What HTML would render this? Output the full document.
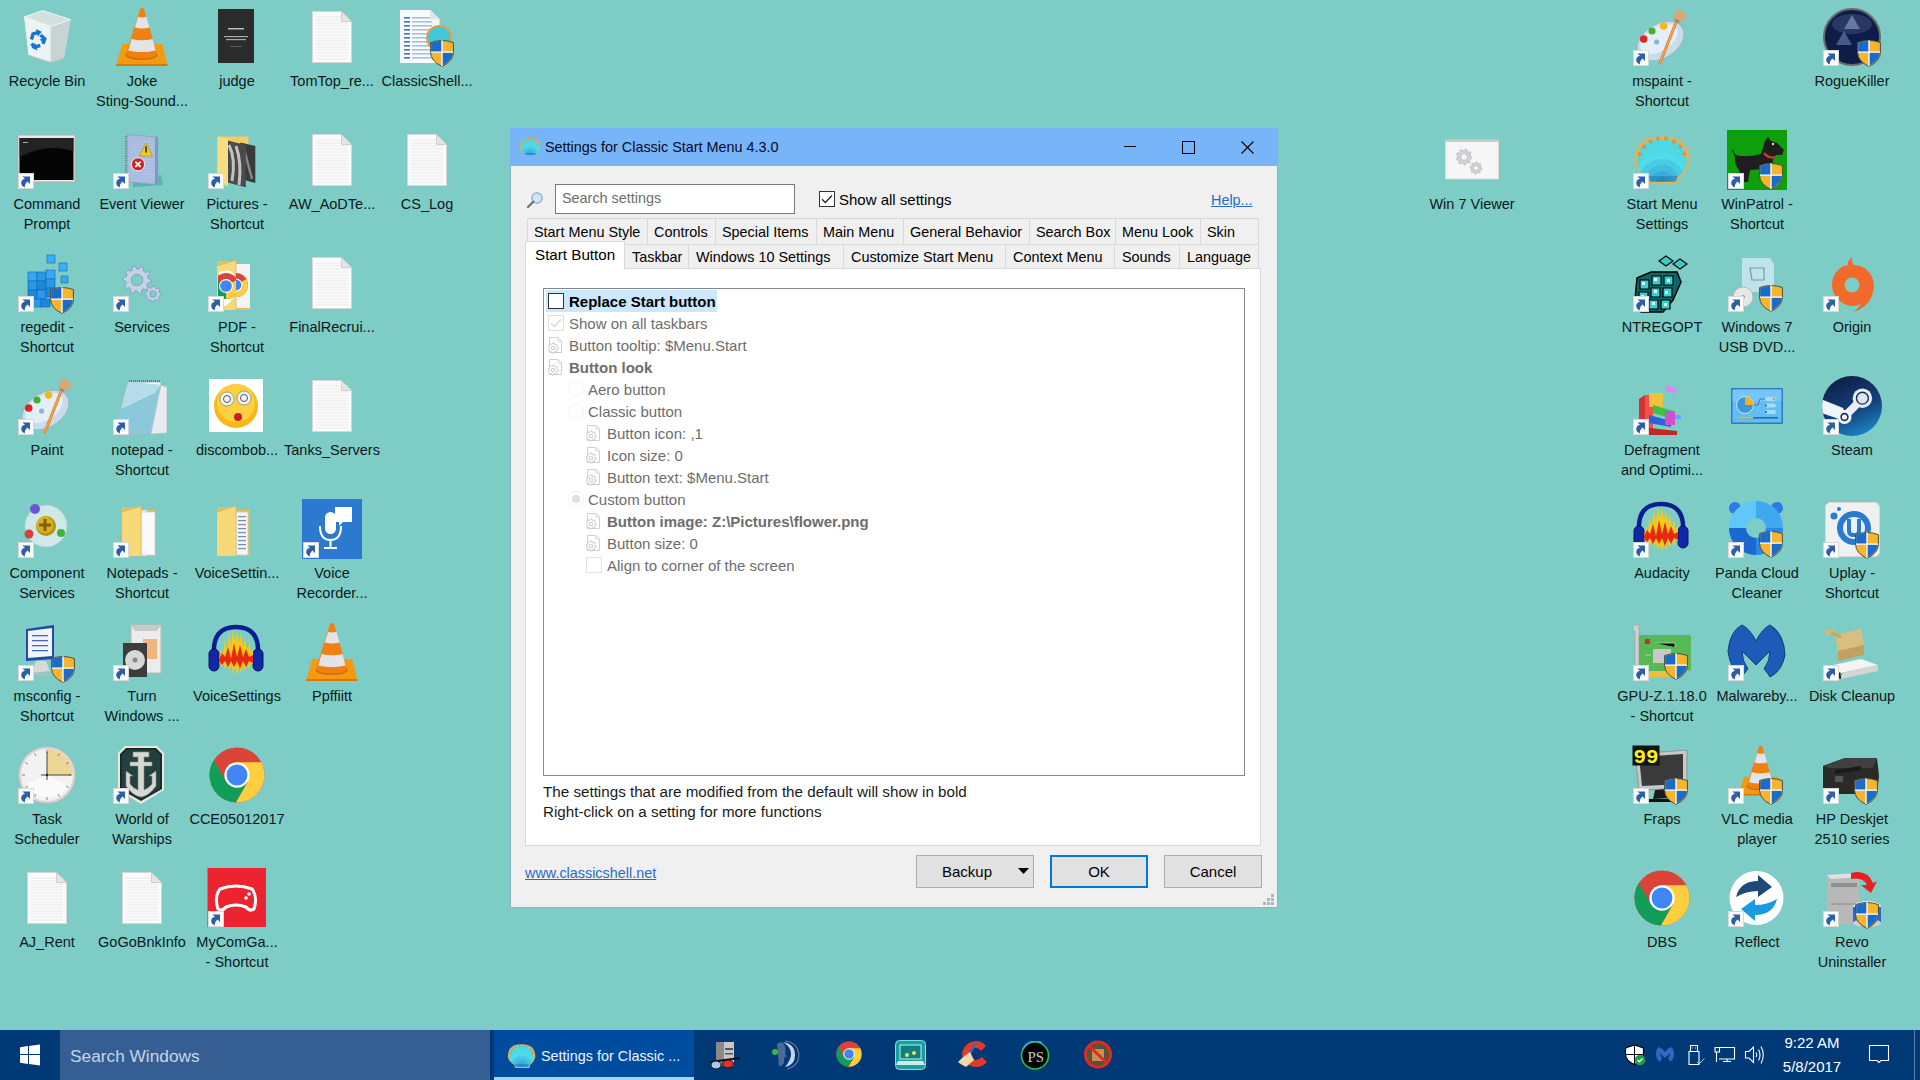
<!DOCTYPE html>
<html><head><meta charset="utf-8">
<style>
*{margin:0;padding:0;box-sizing:border-box}
html,body{width:1920px;height:1080px;overflow:hidden}
body{background:#7ECCC6;font-family:"Liberation Sans",sans-serif;position:relative;color:#000}
.a{position:absolute}
/* desktop icons */
.lb{position:absolute;width:104px;text-align:center;font-size:14.5px;line-height:20px;color:#0C1A1A;white-space:nowrap}
/* dialog */
#win{left:510px;top:128px;width:768px;height:780px;background:#F0F0F0}
#tb{left:0;top:0;width:768px;height:38px;background:#78B4F8}
.t{position:absolute;font-size:14.4px;line-height:18px;white-space:pre}
.tab{position:absolute;height:25px;background:#F0F0F0;border:1px solid #D9D9D9;border-bottom:0;font-size:14.4px;line-height:25px;text-align:left;padding-left:6px;white-space:pre;color:#000}
.btn{position:absolute;top:727px;height:33px;background:#E1E1E1;border:1px solid #ADADAD;font-size:15px;line-height:31px;text-align:center}
.row{position:absolute;left:25px;height:22px;font-size:15px;line-height:24px;white-space:pre;color:#6D6D6D}
/* taskbar */
#task{left:0;top:1030px;width:1920px;height:50px;background:#003976}
</style></head><body>

<div id="desk">
<svg class="a" style="left:16px;top:6px" width="62" height="62" viewBox="0 0 62 62"><path d="M8.2 10.8L26.7 4.6L54.6 13.5L48 51.5L34.7 55.9L12.6 48.9Z" fill="#DCE6E6"/><path d="M8.2 10.8L34.7 20.5L34.7 55.9L12.6 48.9Z" fill="#EEF2F2"/><path d="M34.7 20.5L54.6 13.5L48 51.5L34.7 55.9Z" fill="#C8D4D4"/><path d="M8.2 10.8L26.7 4.6L54.6 13.5L34.7 20.5Z" fill="#D4E0E0" stroke="#F4F8F8" stroke-width="0.8"/><path d="M13 48.9L34.7 55.9L48 51.5L48 53L34.7 57L13 50Z" fill="#B8C4C4"/><g transform="translate(21.5,33) rotate(-15)" fill="none" stroke="#1476D2" stroke-width="3.4"><path d="M-6 -1L-3 -6L2 -6"/><path d="M4 -3L7 2L4 6"/><path d="M1 7L-5 7L-7 3"/></g><g transform="translate(21.5,33) rotate(-15)" fill="#1476D2"><path d="M1 -10L6 -6L1 -2Z"/><path d="M9 0L5 6L2 1Z"/><path d="M-3 3L-3 11L-8 7Z"/></g></svg>
<div class="lb" style="left:-5px;top:71px">Recycle Bin</div>
<svg class="a" style="left:111px;top:6px" width="62" height="62" viewBox="0 0 62 62"><path d="M11.4 38H51.2L56.5 59.5H5.2Z" fill="#F49A10"/><path d="M5.2 58H56.5V60H5.2Z" fill="#D87808"/><path d="M29 3Q31 1 33 3L46 48Q46 53 31 53Q15 53 15 48Z" fill="#F08010"/><path d="M27 10.8Q31 12 35.5 10.8L38.5 21.4Q31 23.5 23.8 21.4Z" fill="#E4E4E8"/><path d="M20.6 32.9Q31 35.5 41.6 32.9L44.6 44.4Q31 47.5 17.2 44.4Z" fill="#E4E4E8"/><path d="M15 48Q15 53 31 53Q46 53 46 48" fill="none" stroke="#D06A08" stroke-width="1.5"/></svg>
<div class="lb" style="left:90px;top:71px">Joke<br>Sting-Sound...</div>
<svg class="a" style="left:206px;top:6px" width="62" height="62" viewBox="0 0 62 62"><rect x="12" y="3" width="36" height="54" fill="#2B2B2B"/><rect x="22" y="22" width="16" height="1.5" fill="#bbb"/><rect x="18" y="30" width="24" height="1.2" fill="#aaa"/><rect x="20" y="33" width="20" height="1.2" fill="#aaa"/><rect x="24" y="40" width="12" height="0.8" fill="#666"/></svg>
<div class="lb" style="left:185px;top:71px">judge</div>
<svg class="a" style="left:301px;top:6px" width="62" height="62" viewBox="0 0 62 62"><path d="M11.5 5.5H40.5L50.5 15.5V56.5H11.5Z" fill="#FBFBFB" stroke="#D6D6D6"/><line x1="15" x2="47" y1="11" y2="11" stroke="#E6E6E6" stroke-width="0.8"/><line x1="15" x2="47" y1="14" y2="14" stroke="#E6E6E6" stroke-width="0.8"/><line x1="15" x2="47" y1="17" y2="17" stroke="#E6E6E6" stroke-width="0.8"/><line x1="15" x2="47" y1="20" y2="20" stroke="#E6E6E6" stroke-width="0.8"/><line x1="15" x2="47" y1="23" y2="23" stroke="#E6E6E6" stroke-width="0.8"/><line x1="15" x2="47" y1="26" y2="26" stroke="#E6E6E6" stroke-width="0.8"/><line x1="15" x2="47" y1="29" y2="29" stroke="#E6E6E6" stroke-width="0.8"/><line x1="15" x2="47" y1="32" y2="32" stroke="#E6E6E6" stroke-width="0.8"/><line x1="15" x2="47" y1="35" y2="35" stroke="#E6E6E6" stroke-width="0.8"/><line x1="15" x2="47" y1="38" y2="38" stroke="#E6E6E6" stroke-width="0.8"/><line x1="15" x2="47" y1="41" y2="41" stroke="#E6E6E6" stroke-width="0.8"/><line x1="15" x2="47" y1="44" y2="44" stroke="#E6E6E6" stroke-width="0.8"/><line x1="15" x2="47" y1="47" y2="47" stroke="#E6E6E6" stroke-width="0.8"/><line x1="15" x2="47" y1="50" y2="50" stroke="#E6E6E6" stroke-width="0.8"/><line x1="15" x2="47" y1="53" y2="53" stroke="#E6E6E6" stroke-width="0.8"/><path d="M40.5 5.5V15.5H50.5Z" fill="#E4E4E4" stroke="#D0D0D0"/></svg>
<div class="lb" style="left:280px;top:71px">TomTop_re...</div>
<svg class="a" style="left:396px;top:6px" width="62" height="62" viewBox="0 0 62 62"><path d="M3.5 3.5H34L44 13.5V57.5H3.5Z" fill="#F8FAFC" stroke="#A8B8C8"/><rect x="8" y="11" width="6" height="1.6" fill="#3C74C8"/><rect x="16" y="11" width="20" height="1.6" fill="#A8C0DC"/><rect x="8" y="15" width="6" height="1.6" fill="#3C74C8"/><rect x="16" y="15" width="20" height="1.6" fill="#A8C0DC"/><rect x="8" y="19" width="6" height="1.6" fill="#3C74C8"/><rect x="16" y="19" width="20" height="1.6" fill="#A8C0DC"/><rect x="8" y="23" width="6" height="1.6" fill="#3C74C8"/><rect x="16" y="23" width="20" height="1.6" fill="#A8C0DC"/><rect x="8" y="27" width="6" height="1.6" fill="#3C74C8"/><rect x="16" y="27" width="20" height="1.6" fill="#A8C0DC"/><rect x="8" y="31" width="6" height="1.6" fill="#3C74C8"/><rect x="16" y="31" width="20" height="1.6" fill="#A8C0DC"/><rect x="8" y="35" width="6" height="1.6" fill="#3C74C8"/><rect x="16" y="35" width="20" height="1.6" fill="#A8C0DC"/><rect x="8" y="39" width="6" height="1.6" fill="#3C74C8"/><rect x="16" y="39" width="20" height="1.6" fill="#A8C0DC"/><rect x="8" y="43" width="6" height="1.6" fill="#3C74C8"/><rect x="16" y="43" width="20" height="1.6" fill="#A8C0DC"/><rect x="8" y="47" width="6" height="1.6" fill="#3C74C8"/><rect x="16" y="47" width="20" height="1.6" fill="#A8C0DC"/><rect x="8" y="51" width="6" height="1.6" fill="#3C74C8"/><rect x="16" y="51" width="20" height="1.6" fill="#A8C0DC"/><path d="M34 3.5V13.5H44Z" fill="#DDE6EE"/><circle cx="43" cy="32" r="13" fill="#E89A4A"/><circle cx="43" cy="32" r="11" fill="#3FC8D8"/><g transform="translate(34,33) scale(1.200)"><path d="M0.5 3Q10 -0.5 19.5 3V11Q19.5 18.5 10 22.8Q0.5 18.5 0.5 11Z" fill="#F6B52C" stroke="#4A4A3A" stroke-width="0.8"/><path d="M1 3.4Q5.5 1.6 10 1.2V11H1Z" fill="#1B6BCB"/><path d="M10 11H19Q18.8 18 10 22.2Z" fill="#1B6BCB"/><path d="M10 1V22.4M0.8 11H19.2" stroke="#FFFFFF" stroke-width="1.1"/></g></svg>
<div class="lb" style="left:375px;top:71px">ClassicShell...</div>
<svg class="a" style="left:16px;top:129px" width="62" height="62" viewBox="0 0 62 62"><rect x="2" y="6" width="57" height="47" fill="#E8E8E8" stroke="#B0B0B0"/><rect x="3.5" y="9" width="54" height="42" fill="#050505"/><path d="M3.5 9H57.5V22Q30 14 3.5 28Z" fill="#2A2A2A" opacity="0.8"/><rect x="7" y="13" width="5" height="1" fill="#aaa"/><rect x="2.5" y="44.5" width="15" height="15" fill="#FBFBFB" stroke="#D8D8D8"/><path d="M6.4 47.4H14V55L11.6 52.6Q8.6 54.6 8.8 58.6Q5 57 5.2 53.6Q5.6 50.6 9 49.8Z" fill="#2D5EA8"/></svg>
<div class="lb" style="left:-5px;top:194px">Command<br>Prompt</div>
<svg class="a" style="left:111px;top:129px" width="62" height="62" viewBox="0 0 62 62"><path d="M22 50L50 46L52 56L22 58Z" fill="#3A9C98" opacity="0.5"/><path d="M16 5.5L46.7 8V55.6L16 53Z" fill="#A8BCE0" stroke="#8AA0C8" stroke-width="0.8"/><path d="M44 8L47 8.3V55.6L44 55Z" fill="#8098C4"/><line x1="20" x2="43" y1="12" y2="12.6" stroke="#B8CAE8" stroke-width="0.6"/><line x1="20" x2="43" y1="15" y2="15.6" stroke="#B8CAE8" stroke-width="0.6"/><line x1="20" x2="43" y1="18" y2="18.6" stroke="#B8CAE8" stroke-width="0.6"/><line x1="20" x2="43" y1="21" y2="21.6" stroke="#B8CAE8" stroke-width="0.6"/><line x1="20" x2="43" y1="24" y2="24.6" stroke="#B8CAE8" stroke-width="0.6"/><line x1="20" x2="43" y1="27" y2="27.6" stroke="#B8CAE8" stroke-width="0.6"/><line x1="20" x2="43" y1="30" y2="30.6" stroke="#B8CAE8" stroke-width="0.6"/><line x1="20" x2="43" y1="33" y2="33.6" stroke="#B8CAE8" stroke-width="0.6"/><line x1="20" x2="43" y1="36" y2="36.6" stroke="#B8CAE8" stroke-width="0.6"/><line x1="20" x2="43" y1="39" y2="39.6" stroke="#B8CAE8" stroke-width="0.6"/><line x1="20" x2="43" y1="42" y2="42.6" stroke="#B8CAE8" stroke-width="0.6"/><line x1="20" x2="43" y1="45" y2="45.6" stroke="#B8CAE8" stroke-width="0.6"/><line x1="20" x2="43" y1="48" y2="48.6" stroke="#B8CAE8" stroke-width="0.6"/><line x1="20" x2="43" y1="51" y2="51.6" stroke="#B8CAE8" stroke-width="0.6"/><path d="M15 7V53" stroke="#7A86A0" stroke-width="2.4" stroke-dasharray="1.2 1.2"/><path d="M35 14L41.5 27H28.5Z" fill="#F4CC20" stroke="#B8940C" stroke-width="0.8"/><rect x="34.3" y="17.5" width="1.5" height="6" fill="#222"/><circle cx="27" cy="35.3" r="6.6" fill="#C82222" stroke="#F0F0F0" stroke-width="1"/><path d="M24.3 32.6L29.7 38M29.7 32.6L24.3 38" stroke="#F0F0F0" stroke-width="1.8"/><rect x="2.5" y="44.5" width="15" height="15" fill="#FBFBFB" stroke="#D8D8D8"/><path d="M6.4 47.4H14V55L11.6 52.6Q8.6 54.6 8.8 58.6Q5 57 5.2 53.6Q5.6 50.6 9 49.8Z" fill="#2D5EA8"/></svg>
<div class="lb" style="left:90px;top:194px">Event Viewer</div>
<svg class="a" style="left:206px;top:129px" width="62" height="62" viewBox="0 0 62 62"><path d="M11.3 7.5H42.5V50H11.3Z" fill="#F0CC6A"/><path d="M34.4 13.6L49.3 17V54L34.4 50Z" fill="#3A3A3A"/><path d="M38 20L46 50" stroke="#9A9A9A" stroke-width="2.5" opacity="0.8"/><path d="M19.4 10.9L39.8 16V58.3L19.4 53Z" fill="#4A4A4A"/><path d="M23 16Q30 30 26 52M30 17Q36 34 33 56" stroke="#D8D8D8" stroke-width="3" fill="none" opacity="0.85"/><path d="M11.3 7.5L22 10V57.6L11.3 52Z" fill="#F8DC80"/><rect x="2.5" y="44.5" width="15" height="15" fill="#FBFBFB" stroke="#D8D8D8"/><path d="M6.4 47.4H14V55L11.6 52.6Q8.6 54.6 8.8 58.6Q5 57 5.2 53.6Q5.6 50.6 9 49.8Z" fill="#2D5EA8"/></svg>
<div class="lb" style="left:185px;top:194px">Pictures -<br>Shortcut</div>
<svg class="a" style="left:301px;top:129px" width="62" height="62" viewBox="0 0 62 62"><path d="M11.5 5.5H40.5L50.5 15.5V56.5H11.5Z" fill="#FBFBFB" stroke="#D6D6D6"/><line x1="15" x2="47" y1="11" y2="11" stroke="#E6E6E6" stroke-width="0.8"/><line x1="15" x2="47" y1="14" y2="14" stroke="#E6E6E6" stroke-width="0.8"/><line x1="15" x2="47" y1="17" y2="17" stroke="#E6E6E6" stroke-width="0.8"/><line x1="15" x2="47" y1="20" y2="20" stroke="#E6E6E6" stroke-width="0.8"/><line x1="15" x2="47" y1="23" y2="23" stroke="#E6E6E6" stroke-width="0.8"/><line x1="15" x2="47" y1="26" y2="26" stroke="#E6E6E6" stroke-width="0.8"/><line x1="15" x2="47" y1="29" y2="29" stroke="#E6E6E6" stroke-width="0.8"/><line x1="15" x2="47" y1="32" y2="32" stroke="#E6E6E6" stroke-width="0.8"/><line x1="15" x2="47" y1="35" y2="35" stroke="#E6E6E6" stroke-width="0.8"/><line x1="15" x2="47" y1="38" y2="38" stroke="#E6E6E6" stroke-width="0.8"/><line x1="15" x2="47" y1="41" y2="41" stroke="#E6E6E6" stroke-width="0.8"/><line x1="15" x2="47" y1="44" y2="44" stroke="#E6E6E6" stroke-width="0.8"/><line x1="15" x2="47" y1="47" y2="47" stroke="#E6E6E6" stroke-width="0.8"/><line x1="15" x2="47" y1="50" y2="50" stroke="#E6E6E6" stroke-width="0.8"/><line x1="15" x2="47" y1="53" y2="53" stroke="#E6E6E6" stroke-width="0.8"/><path d="M40.5 5.5V15.5H50.5Z" fill="#E4E4E4" stroke="#D0D0D0"/></svg>
<div class="lb" style="left:280px;top:194px">AW_AoDTe...</div>
<svg class="a" style="left:396px;top:129px" width="62" height="62" viewBox="0 0 62 62"><path d="M11.5 5.5H40.5L50.5 15.5V56.5H11.5Z" fill="#FBFBFB" stroke="#D6D6D6"/><line x1="15" x2="47" y1="11" y2="11" stroke="#E6E6E6" stroke-width="0.8"/><line x1="15" x2="47" y1="14" y2="14" stroke="#E6E6E6" stroke-width="0.8"/><line x1="15" x2="47" y1="17" y2="17" stroke="#E6E6E6" stroke-width="0.8"/><line x1="15" x2="47" y1="20" y2="20" stroke="#E6E6E6" stroke-width="0.8"/><line x1="15" x2="47" y1="23" y2="23" stroke="#E6E6E6" stroke-width="0.8"/><line x1="15" x2="47" y1="26" y2="26" stroke="#E6E6E6" stroke-width="0.8"/><line x1="15" x2="47" y1="29" y2="29" stroke="#E6E6E6" stroke-width="0.8"/><line x1="15" x2="47" y1="32" y2="32" stroke="#E6E6E6" stroke-width="0.8"/><line x1="15" x2="47" y1="35" y2="35" stroke="#E6E6E6" stroke-width="0.8"/><line x1="15" x2="47" y1="38" y2="38" stroke="#E6E6E6" stroke-width="0.8"/><line x1="15" x2="47" y1="41" y2="41" stroke="#E6E6E6" stroke-width="0.8"/><line x1="15" x2="47" y1="44" y2="44" stroke="#E6E6E6" stroke-width="0.8"/><line x1="15" x2="47" y1="47" y2="47" stroke="#E6E6E6" stroke-width="0.8"/><line x1="15" x2="47" y1="50" y2="50" stroke="#E6E6E6" stroke-width="0.8"/><line x1="15" x2="47" y1="53" y2="53" stroke="#E6E6E6" stroke-width="0.8"/><path d="M40.5 5.5V15.5H50.5Z" fill="#E4E4E4" stroke="#D0D0D0"/></svg>
<div class="lb" style="left:375px;top:194px">CS_Log</div>
<svg class="a" style="left:16px;top:252px" width="62" height="62" viewBox="0 0 62 62"><rect x="12" y="20" width="9" height="9" fill="#3AA8F0" stroke="#0A6AB8" stroke-width="0.6"/><rect x="21" y="20" width="9" height="9" fill="#2C98E6" stroke="#0A6AB8" stroke-width="0.6"/><rect x="30" y="18" width="9" height="9" fill="#3AA8F0" stroke="#0A6AB8" stroke-width="0.6"/><rect x="12" y="29" width="9" height="9" fill="#2C98E6" stroke="#0A6AB8" stroke-width="0.6"/><rect x="21" y="29" width="9" height="9" fill="#1C88D8" stroke="#0A6AB8" stroke-width="0.6"/><rect x="30" y="27" width="9" height="9" fill="#2C98E6" stroke="#0A6AB8" stroke-width="0.6"/><rect x="12" y="38" width="9" height="9" fill="#1C88D8" stroke="#0A6AB8" stroke-width="0.6"/><rect x="21" y="38" width="9" height="9" fill="#2C98E6" stroke="#0A6AB8" stroke-width="0.6"/><rect x="30" y="36" width="9" height="9" fill="#1C88D8" stroke="#0A6AB8" stroke-width="0.6"/><rect x="16" y="47" width="9" height="8" fill="#2C98E6" stroke="#0A6AB8" stroke-width="0.6"/><rect x="25" y="47" width="9" height="8" fill="#1C88D8" stroke="#0A6AB8" stroke-width="0.6"/><rect x="31" y="3" width="8" height="8" fill="#3AB0F8" stroke="#0A6AB8" stroke-width="0.6"/><rect x="43" y="11" width="8" height="8" fill="#3AB0F8" stroke="#0A6AB8" stroke-width="0.6"/><rect x="45" y="24" width="7" height="7" fill="#3AA8F0" stroke="#0A6AB8" stroke-width="0.6"/><g transform="translate(34,34) scale(1.200)"><path d="M0.5 3Q10 -0.5 19.5 3V11Q19.5 18.5 10 22.8Q0.5 18.5 0.5 11Z" fill="#F6B52C" stroke="#4A4A3A" stroke-width="0.8"/><path d="M1 3.4Q5.5 1.6 10 1.2V11H1Z" fill="#1B6BCB"/><path d="M10 11H19Q18.8 18 10 22.2Z" fill="#1B6BCB"/><path d="M10 1V22.4M0.8 11H19.2" stroke="#FFFFFF" stroke-width="1.1"/></g><rect x="2.5" y="44.5" width="15" height="15" fill="#FBFBFB" stroke="#D8D8D8"/><path d="M6.4 47.4H14V55L11.6 52.6Q8.6 54.6 8.8 58.6Q5 57 5.2 53.6Q5.6 50.6 9 49.8Z" fill="#2D5EA8"/></svg>
<div class="lb" style="left:-5px;top:317px">regedit -<br>Shortcut</div>
<svg class="a" style="left:111px;top:252px" width="62" height="62" viewBox="0 0 62 62"><polygon points="40.00,28.00 39.83,30.19 36.39,31.37 35.73,32.96 37.33,36.23 35.90,37.90 32.42,36.83 30.96,37.73 30.33,41.31 28.19,41.83 26.00,38.92 24.29,38.79 21.67,41.31 19.64,40.47 19.58,36.83 18.28,35.72 14.67,36.23 13.53,34.36 15.61,31.37 15.21,29.71 12.00,28.00 12.17,25.81 15.61,24.63 16.27,23.04 14.67,19.77 16.10,18.10 19.58,19.17 21.04,18.27 21.67,14.69 23.81,14.17 26.00,17.08 27.71,17.21 30.33,14.69 32.36,15.53 32.42,19.17 33.72,20.28 37.33,19.77 38.47,21.64 36.39,24.63 36.79,26.29" fill="#C4D2E8" stroke="#8898B8" stroke-width="0.8"/><circle cx="26" cy="28" r="5.88" fill="#7ECCC6" stroke="#8898B8" stroke-width="0.8"/><polygon points="50.00,42.00 49.85,43.56 47.77,44.39 47.19,45.47 47.66,47.66 46.44,48.65 44.39,47.77 43.22,48.12 42.00,50.00 40.44,49.85 39.61,47.77 38.53,47.19 36.34,47.66 35.35,46.44 36.23,44.39 35.88,43.22 34.00,42.00 34.15,40.44 36.23,39.61 36.81,38.53 36.34,36.34 37.56,35.35 39.61,36.23 40.78,35.88 42.00,34.00 43.56,34.15 44.39,36.23 45.47,36.81 47.66,36.34 48.65,37.56 47.77,39.61 48.12,40.78" fill="#C4D2E8" stroke="#8898B8" stroke-width="0.8"/><circle cx="42" cy="42" r="3.36" fill="#7ECCC6" stroke="#8898B8" stroke-width="0.8"/><rect x="2.5" y="44.5" width="15" height="15" fill="#FBFBFB" stroke="#D8D8D8"/><path d="M6.4 47.4H14V55L11.6 52.6Q8.6 54.6 8.8 58.6Q5 57 5.2 53.6Q5.6 50.6 9 49.8Z" fill="#2D5EA8"/></svg>
<div class="lb" style="left:90px;top:317px">Services</div>
<svg class="a" style="left:206px;top:252px" width="62" height="62" viewBox="0 0 62 62"><path d="M11 9H28L31 12H44V58H11Z" fill="#E9BE55"/><rect x="28" y="12" width="16" height="44" fill="#F4F4F4"/><path d="M11 14L30 8V58L11 58Z" fill="#F8D97A"/><path d="M11 14L30 8V58" fill="none" stroke="#E0B450" stroke-width="0.8"/><g><path d="M13 20Q30 14 30 32Q30 52 13 56Z" fill="#fff"/></g><clipPath id="cpf12"><path d="M12 14L30 8V58H12Z"/></clipPath><g clip-path="url(#cpf12)"><circle cx="20" cy="34" r="13" fill="#DB4437"/><path d="M20 34 L20.00 47.00 A13 13 0 0 1 8.74 27.50 Z" fill="#0F9D58"/><path d="M20 34 L31.26 27.50 A13 13 0 0 1 20.00 47.00 Z" fill="#FFCD40"/><circle cx="20" cy="34" r="7.02" fill="#fff"/><circle cx="20" cy="34" r="5.85" fill="#4285F4"/></g><clipPath id="cpf212"><rect x="30" y="12" width="14" height="44"/></clipPath><g clip-path="url(#cpf212)"><circle cx="30" cy="33" r="12" fill="#DB4437"/><path d="M30 33 L30.00 45.00 A12 12 0 0 1 19.61 27.00 Z" fill="#0F9D58"/><path d="M30 33 L40.39 27.00 A12 12 0 0 1 30.00 45.00 Z" fill="#FFCD40"/><circle cx="30" cy="33" r="6.48" fill="#fff"/><circle cx="30" cy="33" r="5.40" fill="#4285F4"/></g><rect x="2.5" y="44.5" width="15" height="15" fill="#FBFBFB" stroke="#D8D8D8"/><path d="M6.4 47.4H14V55L11.6 52.6Q8.6 54.6 8.8 58.6Q5 57 5.2 53.6Q5.6 50.6 9 49.8Z" fill="#2D5EA8"/></svg>
<div class="lb" style="left:185px;top:317px">PDF -<br>Shortcut</div>
<svg class="a" style="left:301px;top:252px" width="62" height="62" viewBox="0 0 62 62"><path d="M11.5 5.5H40.5L50.5 15.5V56.5H11.5Z" fill="#FBFBFB" stroke="#D6D6D6"/><line x1="15" x2="47" y1="11" y2="11" stroke="#E6E6E6" stroke-width="0.8"/><line x1="15" x2="47" y1="14" y2="14" stroke="#E6E6E6" stroke-width="0.8"/><line x1="15" x2="47" y1="17" y2="17" stroke="#E6E6E6" stroke-width="0.8"/><line x1="15" x2="47" y1="20" y2="20" stroke="#E6E6E6" stroke-width="0.8"/><line x1="15" x2="47" y1="23" y2="23" stroke="#E6E6E6" stroke-width="0.8"/><line x1="15" x2="47" y1="26" y2="26" stroke="#E6E6E6" stroke-width="0.8"/><line x1="15" x2="47" y1="29" y2="29" stroke="#E6E6E6" stroke-width="0.8"/><line x1="15" x2="47" y1="32" y2="32" stroke="#E6E6E6" stroke-width="0.8"/><line x1="15" x2="47" y1="35" y2="35" stroke="#E6E6E6" stroke-width="0.8"/><line x1="15" x2="47" y1="38" y2="38" stroke="#E6E6E6" stroke-width="0.8"/><line x1="15" x2="47" y1="41" y2="41" stroke="#E6E6E6" stroke-width="0.8"/><line x1="15" x2="47" y1="44" y2="44" stroke="#E6E6E6" stroke-width="0.8"/><line x1="15" x2="47" y1="47" y2="47" stroke="#E6E6E6" stroke-width="0.8"/><line x1="15" x2="47" y1="50" y2="50" stroke="#E6E6E6" stroke-width="0.8"/><line x1="15" x2="47" y1="53" y2="53" stroke="#E6E6E6" stroke-width="0.8"/><path d="M40.5 5.5V15.5H50.5Z" fill="#E4E4E4" stroke="#D0D0D0"/></svg>
<div class="lb" style="left:280px;top:317px">FinalRecrui...</div>
<svg class="a" style="left:16px;top:375px" width="62" height="62" viewBox="0 0 62 62"><ellipse cx="29.5" cy="35" rx="25.5" ry="17" transform="rotate(-32 29.5 35)" fill="#C8DCEC" stroke="#9AB4CA" stroke-width="0.8"/><ellipse cx="28" cy="33" rx="21" ry="12" transform="rotate(-32 28 33)" fill="#E2EEF8"/><circle cx="12.7" cy="33" r="3.8" fill="#E02424"/><circle cx="21" cy="25" r="3.6" fill="#44B030"/><circle cx="32.6" cy="20" r="3.8" fill="#F4B818"/><circle cx="25.6" cy="36" r="2.6" fill="#8EB4C8"/><path d="M29 57L46 14" stroke="#E8862A" stroke-width="3" stroke-linecap="round"/><path d="M29 57L46 14" stroke="#F8B060" stroke-width="1" stroke-linecap="round"/><path d="M44 15L42 12L47 3L57 9L49 17Z" fill="#D8A870"/><path d="M44 14L48 16" stroke="#8A8A8A" stroke-width="2"/><rect x="2.5" y="44.5" width="15" height="15" fill="#FBFBFB" stroke="#D8D8D8"/><path d="M6.4 47.4H14V55L11.6 52.6Q8.6 54.6 8.8 58.6Q5 57 5.2 53.6Q5.6 50.6 9 49.8Z" fill="#2D5EA8"/></svg>
<div class="lb" style="left:-5px;top:440px">Paint</div>
<svg class="a" style="left:111px;top:375px" width="62" height="62" viewBox="0 0 62 62"><path d="M17 7H50V55L40 59H3Z" fill="#F4F8FA" stroke="#A8B4BC"/><path d="M17 7L3 59H40L50 10Z" fill="#8CC8DC"/><path d="M17 7L10 34L44 18L50 10Z" fill="#C8E6F0" opacity="0.7"/><path d="M50 10L56 12V58L40 59Z" fill="#E8ECEE" stroke="#B0B8BC" stroke-width="0.6"/><path d="M18 6H50" stroke="#707070" stroke-width="2" stroke-dasharray="1 1"/><rect x="2.5" y="44.5" width="15" height="15" fill="#FBFBFB" stroke="#D8D8D8"/><path d="M6.4 47.4H14V55L11.6 52.6Q8.6 54.6 8.8 58.6Q5 57 5.2 53.6Q5.6 50.6 9 49.8Z" fill="#2D5EA8"/></svg>
<div class="lb" style="left:90px;top:440px">notepad -<br>Shortcut</div>
<svg class="a" style="left:206px;top:375px" width="62" height="62" viewBox="0 0 62 62"><rect x="3" y="4" width="54" height="53" fill="#FFFFFF"/><circle cx="30" cy="31" r="22" fill="#F8B818"/><circle cx="30" cy="28" r="19" fill="#FCD040"/><circle cx="21" cy="24" r="7" fill="#F4F4F4" stroke="#888" stroke-width="0.8"/><circle cx="38" cy="23" r="7" fill="#F4F4F4" stroke="#888" stroke-width="0.8"/><circle cx="21" cy="24" r="3.5" fill="none" stroke="#555" stroke-width="1"/><circle cx="38" cy="23" r="3.5" fill="none" stroke="#555" stroke-width="1"/><circle cx="32" cy="42" r="4" fill="#C82020"/></svg>
<div class="lb" style="left:185px;top:440px">discombob...</div>
<svg class="a" style="left:301px;top:375px" width="62" height="62" viewBox="0 0 62 62"><path d="M11.5 5.5H40.5L50.5 15.5V56.5H11.5Z" fill="#FBFBFB" stroke="#D6D6D6"/><line x1="15" x2="47" y1="11" y2="11" stroke="#E6E6E6" stroke-width="0.8"/><line x1="15" x2="47" y1="14" y2="14" stroke="#E6E6E6" stroke-width="0.8"/><line x1="15" x2="47" y1="17" y2="17" stroke="#E6E6E6" stroke-width="0.8"/><line x1="15" x2="47" y1="20" y2="20" stroke="#E6E6E6" stroke-width="0.8"/><line x1="15" x2="47" y1="23" y2="23" stroke="#E6E6E6" stroke-width="0.8"/><line x1="15" x2="47" y1="26" y2="26" stroke="#E6E6E6" stroke-width="0.8"/><line x1="15" x2="47" y1="29" y2="29" stroke="#E6E6E6" stroke-width="0.8"/><line x1="15" x2="47" y1="32" y2="32" stroke="#E6E6E6" stroke-width="0.8"/><line x1="15" x2="47" y1="35" y2="35" stroke="#E6E6E6" stroke-width="0.8"/><line x1="15" x2="47" y1="38" y2="38" stroke="#E6E6E6" stroke-width="0.8"/><line x1="15" x2="47" y1="41" y2="41" stroke="#E6E6E6" stroke-width="0.8"/><line x1="15" x2="47" y1="44" y2="44" stroke="#E6E6E6" stroke-width="0.8"/><line x1="15" x2="47" y1="47" y2="47" stroke="#E6E6E6" stroke-width="0.8"/><line x1="15" x2="47" y1="50" y2="50" stroke="#E6E6E6" stroke-width="0.8"/><line x1="15" x2="47" y1="53" y2="53" stroke="#E6E6E6" stroke-width="0.8"/><path d="M40.5 5.5V15.5H50.5Z" fill="#E4E4E4" stroke="#D0D0D0"/></svg>
<div class="lb" style="left:280px;top:440px">Tanks_Servers</div>
<svg class="a" style="left:16px;top:498px" width="62" height="62" viewBox="0 0 62 62"><circle cx="30" cy="28" r="21" fill="#D8ECEC" opacity="0.9" stroke="#B8D4D8"/><circle cx="30" cy="28" r="10" fill="#B89010"/><circle cx="29" cy="27" r="8.5" fill="#D8B020"/><path d="M29 21V33M23 27H35" stroke="#806008" stroke-width="3"/><circle cx="19" cy="11" r="5" fill="#6858D8"/><circle cx="13" cy="36" r="4.5" fill="#D84040"/><circle cx="45" cy="35" r="4" fill="#40B040"/><rect x="2.5" y="44.5" width="15" height="15" fill="#FBFBFB" stroke="#D8D8D8"/><path d="M6.4 47.4H14V55L11.6 52.6Q8.6 54.6 8.8 58.6Q5 57 5.2 53.6Q5.6 50.6 9 49.8Z" fill="#2D5EA8"/></svg>
<div class="lb" style="left:-5px;top:563px">Component<br>Services</div>
<svg class="a" style="left:111px;top:498px" width="62" height="62" viewBox="0 0 62 62"><path d="M11 9H28L31 12H44V58H11Z" fill="#E9BE55"/><path d="M16 12H36V58H16Z" fill="#F0F0F0" stroke="#C8C8C8" stroke-width="0.6"/><path d="M30 14H44V57H30Z" fill="#FAFAFA" stroke="#C8C8C8" stroke-width="0.6"/><path d="M11 14L30 8V58L11 58Z" fill="#F8D97A"/><path d="M11 14L30 8V58" fill="none" stroke="#E0B450" stroke-width="0.8"/><rect x="2.5" y="44.5" width="15" height="15" fill="#FBFBFB" stroke="#D8D8D8"/><path d="M6.4 47.4H14V55L11.6 52.6Q8.6 54.6 8.8 58.6Q5 57 5.2 53.6Q5.6 50.6 9 49.8Z" fill="#2D5EA8"/></svg>
<div class="lb" style="left:90px;top:563px">Notepads -<br>Shortcut</div>
<svg class="a" style="left:206px;top:498px" width="62" height="62" viewBox="0 0 62 62"><path d="M11 9H28L31 12H44V58H11Z" fill="#E9BE55"/><path d="M30 14H42V57H30Z" fill="#F4F4F4" stroke="#C0C0C0" stroke-width="0.6"/><rect x="32" y="18" width="8" height="1.2" fill="#7090B0"/><rect x="32" y="22" width="8" height="1.2" fill="#7090B0"/><rect x="32" y="26" width="8" height="1.2" fill="#7090B0"/><rect x="32" y="30" width="8" height="1.2" fill="#7090B0"/><rect x="32" y="34" width="8" height="1.2" fill="#7090B0"/><rect x="32" y="38" width="8" height="1.2" fill="#7090B0"/><rect x="32" y="42" width="8" height="1.2" fill="#7090B0"/><rect x="32" y="46" width="8" height="1.2" fill="#7090B0"/><rect x="32" y="50" width="8" height="1.2" fill="#7090B0"/><path d="M11 14L30 8V58L11 58Z" fill="#F8D97A"/><path d="M11 14L30 8V58" fill="none" stroke="#E0B450" stroke-width="0.8"/></svg>
<div class="lb" style="left:185px;top:563px">VoiceSettin...</div>
<svg class="a" style="left:301px;top:498px" width="62" height="62" viewBox="0 0 62 62"><rect x="1" y="1" width="60" height="60" fill="#2B7AD0"/><rect x="24" y="14" width="11" height="22" rx="5.5" fill="#fff"/><path d="M19 28Q19 42 29.5 42Q40 42 40 28" fill="none" stroke="#fff" stroke-width="2"/><path d="M29.5 42V49M23 50H36" stroke="#fff" stroke-width="2"/><path d="M34 9H51V24H42L38 28V24H34Z" fill="#fff"/><rect x="2.5" y="44.5" width="15" height="15" fill="#FBFBFB" stroke="#D8D8D8"/><path d="M6.4 47.4H14V55L11.6 52.6Q8.6 54.6 8.8 58.6Q5 57 5.2 53.6Q5.6 50.6 9 49.8Z" fill="#2D5EA8"/></svg>
<div class="lb" style="left:280px;top:563px">Voice<br>Recorder...</div>
<svg class="a" style="left:16px;top:621px" width="62" height="62" viewBox="0 0 62 62"><path d="M10 8L38 4V38L10 40Z" fill="#2848A8"/><path d="M12 10L36 7V35L12 37Z" fill="#F0F4FC"/><rect x="16" y="14" width="16" height="1.3" fill="#4868B8"/><rect x="16" y="19" width="16" height="1.3" fill="#4868B8"/><rect x="16" y="24" width="16" height="1.3" fill="#4868B8"/><rect x="16" y="29" width="16" height="1.3" fill="#4868B8"/><path d="M20 40L30 40L34 50L16 52Z" fill="#D8D8D8"/><path d="M14 52H36V55H14Z" fill="#B8B8B8"/><g transform="translate(35,34) scale(1.200)"><path d="M0.5 3Q10 -0.5 19.5 3V11Q19.5 18.5 10 22.8Q0.5 18.5 0.5 11Z" fill="#F6B52C" stroke="#4A4A3A" stroke-width="0.8"/><path d="M1 3.4Q5.5 1.6 10 1.2V11H1Z" fill="#1B6BCB"/><path d="M10 11H19Q18.8 18 10 22.2Z" fill="#1B6BCB"/><path d="M10 1V22.4M0.8 11H19.2" stroke="#FFFFFF" stroke-width="1.1"/></g><rect x="2.5" y="44.5" width="15" height="15" fill="#FBFBFB" stroke="#D8D8D8"/><path d="M6.4 47.4H14V55L11.6 52.6Q8.6 54.6 8.8 58.6Q5 57 5.2 53.6Q5.6 50.6 9 49.8Z" fill="#2D5EA8"/></svg>
<div class="lb" style="left:-5px;top:686px">msconfig -<br>Shortcut</div>
<svg class="a" style="left:111px;top:621px" width="62" height="62" viewBox="0 0 62 62"><path d="M20 4H50V52H20Z" fill="#ECECEC" stroke="#B8B8B8"/><path d="M20 4L50 4L46 10H24Z" fill="#C8C8C8"/><rect x="32" y="18" width="14" height="20" fill="#F0A860" opacity="0.8"/><path d="M12 22H36V56H12Z" fill="#3C3C3C"/><circle cx="24" cy="39" r="10" fill="#D8D8D8"/><circle cx="24" cy="39" r="2.5" fill="#888"/><rect x="2.5" y="44.5" width="15" height="15" fill="#FBFBFB" stroke="#D8D8D8"/><path d="M6.4 47.4H14V55L11.6 52.6Q8.6 54.6 8.8 58.6Q5 57 5.2 53.6Q5.6 50.6 9 49.8Z" fill="#2D5EA8"/></svg>
<div class="lb" style="left:90px;top:686px">Turn<br>Windows ...</div>
<svg class="a" style="left:206px;top:621px" width="62" height="62" viewBox="0 0 62 62"><path d="M8 34Q6 6 30 6Q54 6 52 34" fill="none" stroke="#0A1E90" stroke-width="4.5"/><rect x="3" y="28" width="10" height="22" rx="5" fill="#1028A8" stroke="#06145A" stroke-width="1"/><rect x="47" y="28" width="10" height="22" rx="5" fill="#1028A8" stroke="#06145A" stroke-width="1"/><path d="M13 38L15 28L17 34L19 18L21 30L23 12L25 24L27 8L29 20L31 10L33 22L35 12L37 26L39 16L41 30L43 22L45 32L47 28L47 44L45 40L43 48L41 42L39 50L37 44L35 52L33 46L31 54L29 46L27 52L25 44L23 50L21 42L19 48L17 42L15 46L13 40Z" fill="#F8C818"/><path d="M13 38L16 32L19 36L22 26L25 38L28 22L31 36L34 24L37 36L40 28L43 36L47 34L47 42L43 40L40 46L37 40L34 48L31 40L28 46L25 40L22 46L19 40L16 44L13 40Z" fill="#E82810"/></svg>
<div class="lb" style="left:185px;top:686px">VoiceSettings</div>
<svg class="a" style="left:301px;top:621px" width="62" height="62" viewBox="0 0 62 62"><path d="M11.4 38H51.2L56.5 59.5H5.2Z" fill="#F49A10"/><path d="M5.2 58H56.5V60H5.2Z" fill="#D87808"/><path d="M29 3Q31 1 33 3L46 48Q46 53 31 53Q15 53 15 48Z" fill="#F08010"/><path d="M27 10.8Q31 12 35.5 10.8L38.5 21.4Q31 23.5 23.8 21.4Z" fill="#E4E4E8"/><path d="M20.6 32.9Q31 35.5 41.6 32.9L44.6 44.4Q31 47.5 17.2 44.4Z" fill="#E4E4E8"/><path d="M15 48Q15 53 31 53Q46 53 46 48" fill="none" stroke="#D06A08" stroke-width="1.5"/></svg>
<div class="lb" style="left:280px;top:686px">Ppffiitt</div>
<svg class="a" style="left:16px;top:744px" width="62" height="62" viewBox="0 0 62 62"><circle cx="31" cy="31" r="28.5" fill="#D8D8D8" stroke="#B8B8B8" stroke-width="1"/><circle cx="31" cy="31" r="26" fill="#F2F2F2"/><path d="M10 40A24 24 0 0 0 52 42L31 31Z" fill="#FAFAFA"/><path d="M31 31V5A26 26 0 0 1 57 31Z" fill="#EED694"/><line x1="31.0" y1="9.0" x2="31.0" y2="6.0" stroke="#555" stroke-width="0.7"/><line x1="42.0" y1="11.9" x2="43.5" y2="9.3" stroke="#555" stroke-width="0.7"/><line x1="50.1" y1="20.0" x2="52.7" y2="18.5" stroke="#555" stroke-width="0.7"/><line x1="53.0" y1="31.0" x2="56.0" y2="31.0" stroke="#555" stroke-width="0.7"/><line x1="50.1" y1="42.0" x2="52.7" y2="43.5" stroke="#555" stroke-width="0.7"/><line x1="42.0" y1="50.1" x2="43.5" y2="52.7" stroke="#555" stroke-width="0.7"/><line x1="31.0" y1="53.0" x2="31.0" y2="56.0" stroke="#555" stroke-width="0.7"/><line x1="20.0" y1="50.1" x2="18.5" y2="52.7" stroke="#555" stroke-width="0.7"/><line x1="11.9" y1="42.0" x2="9.3" y2="43.5" stroke="#555" stroke-width="0.7"/><line x1="9.0" y1="31.0" x2="6.0" y2="31.0" stroke="#555" stroke-width="0.7"/><line x1="11.9" y1="20.0" x2="9.3" y2="18.5" stroke="#555" stroke-width="0.7"/><line x1="20.0" y1="11.9" x2="18.5" y2="9.3" stroke="#555" stroke-width="0.7"/><path d="M31 36V8M25 31H55" stroke="#2A3440" stroke-width="0.9"/><circle cx="31" cy="31" r="1.2" fill="#222"/><rect x="2.5" y="44.5" width="15" height="15" fill="#FBFBFB" stroke="#D8D8D8"/><path d="M6.4 47.4H14V55L11.6 52.6Q8.6 54.6 8.8 58.6Q5 57 5.2 53.6Q5.6 50.6 9 49.8Z" fill="#2D5EA8"/></svg>
<div class="lb" style="left:-5px;top:809px">Task<br>Scheduler</div>
<svg class="a" style="left:111px;top:744px" width="62" height="62" viewBox="0 0 62 62"><path d="M14 2H46L53 9V46L30 60L7 46V9Z" fill="#E8E8E0"/><path d="M15 4H45L51 10V45L30 57L9 45V10Z" fill="#1A2A2A"/><path d="M16 6H44L49 11V44L30 55L11 44V11Z" fill="#23403C"/><path d="M22 8H38V13H33V18H41V22H33V46Q38 44 41 40V32L38 32L45 27V42Q38 52 30 53Q22 52 15 42V27L22 32L19 32V40Q22 44 27 46V22H19V18H27V13H22Z" fill="#D8D8D2" stroke="#888" stroke-width="0.6"/><rect x="2.5" y="44.5" width="15" height="15" fill="#FBFBFB" stroke="#D8D8D8"/><path d="M6.4 47.4H14V55L11.6 52.6Q8.6 54.6 8.8 58.6Q5 57 5.2 53.6Q5.6 50.6 9 49.8Z" fill="#2D5EA8"/></svg>
<div class="lb" style="left:90px;top:809px">World of<br>Warships</div>
<svg class="a" style="left:206px;top:744px" width="62" height="62" viewBox="0 0 62 62"><clipPath id="cpch128"><circle cx="31" cy="31" r="27.5"/></clipPath><circle cx="31" cy="31" r="27.5" fill="#DB4437"/><g clip-path="url(#cpch128)"><path d="M31.00 18.35L113.50 18.35L89.34 89.34L0.71 108.77L41.96 37.32L31 31Z" fill="#FFCD40"/><path d="M41.96 37.32L0.71 108.77L-40.45 72.25L-21.21 -34.12L20.04 37.33L31 31Z" fill="#0F9D58"/></g><circle cx="31" cy="31" r="12.65" fill="#fff"/><circle cx="31" cy="31" r="10.45" fill="#4285F4"/></svg>
<div class="lb" style="left:185px;top:809px">CCE05012017</div>
<svg class="a" style="left:16px;top:867px" width="62" height="62" viewBox="0 0 62 62"><path d="M11.5 5.5H40.5L50.5 15.5V56.5H11.5Z" fill="#FBFBFB" stroke="#D6D6D6"/><line x1="15" x2="47" y1="11" y2="11" stroke="#E6E6E6" stroke-width="0.8"/><line x1="15" x2="47" y1="14" y2="14" stroke="#E6E6E6" stroke-width="0.8"/><line x1="15" x2="47" y1="17" y2="17" stroke="#E6E6E6" stroke-width="0.8"/><line x1="15" x2="47" y1="20" y2="20" stroke="#E6E6E6" stroke-width="0.8"/><line x1="15" x2="47" y1="23" y2="23" stroke="#E6E6E6" stroke-width="0.8"/><line x1="15" x2="47" y1="26" y2="26" stroke="#E6E6E6" stroke-width="0.8"/><line x1="15" x2="47" y1="29" y2="29" stroke="#E6E6E6" stroke-width="0.8"/><line x1="15" x2="47" y1="32" y2="32" stroke="#E6E6E6" stroke-width="0.8"/><line x1="15" x2="47" y1="35" y2="35" stroke="#E6E6E6" stroke-width="0.8"/><line x1="15" x2="47" y1="38" y2="38" stroke="#E6E6E6" stroke-width="0.8"/><line x1="15" x2="47" y1="41" y2="41" stroke="#E6E6E6" stroke-width="0.8"/><line x1="15" x2="47" y1="44" y2="44" stroke="#E6E6E6" stroke-width="0.8"/><line x1="15" x2="47" y1="47" y2="47" stroke="#E6E6E6" stroke-width="0.8"/><line x1="15" x2="47" y1="50" y2="50" stroke="#E6E6E6" stroke-width="0.8"/><line x1="15" x2="47" y1="53" y2="53" stroke="#E6E6E6" stroke-width="0.8"/><path d="M40.5 5.5V15.5H50.5Z" fill="#E4E4E4" stroke="#D0D0D0"/></svg>
<div class="lb" style="left:-5px;top:932px">AJ_Rent</div>
<svg class="a" style="left:111px;top:867px" width="62" height="62" viewBox="0 0 62 62"><path d="M11.5 5.5H40.5L50.5 15.5V56.5H11.5Z" fill="#FBFBFB" stroke="#D6D6D6"/><line x1="15" x2="47" y1="11" y2="11" stroke="#E6E6E6" stroke-width="0.8"/><line x1="15" x2="47" y1="14" y2="14" stroke="#E6E6E6" stroke-width="0.8"/><line x1="15" x2="47" y1="17" y2="17" stroke="#E6E6E6" stroke-width="0.8"/><line x1="15" x2="47" y1="20" y2="20" stroke="#E6E6E6" stroke-width="0.8"/><line x1="15" x2="47" y1="23" y2="23" stroke="#E6E6E6" stroke-width="0.8"/><line x1="15" x2="47" y1="26" y2="26" stroke="#E6E6E6" stroke-width="0.8"/><line x1="15" x2="47" y1="29" y2="29" stroke="#E6E6E6" stroke-width="0.8"/><line x1="15" x2="47" y1="32" y2="32" stroke="#E6E6E6" stroke-width="0.8"/><line x1="15" x2="47" y1="35" y2="35" stroke="#E6E6E6" stroke-width="0.8"/><line x1="15" x2="47" y1="38" y2="38" stroke="#E6E6E6" stroke-width="0.8"/><line x1="15" x2="47" y1="41" y2="41" stroke="#E6E6E6" stroke-width="0.8"/><line x1="15" x2="47" y1="44" y2="44" stroke="#E6E6E6" stroke-width="0.8"/><line x1="15" x2="47" y1="47" y2="47" stroke="#E6E6E6" stroke-width="0.8"/><line x1="15" x2="47" y1="50" y2="50" stroke="#E6E6E6" stroke-width="0.8"/><line x1="15" x2="47" y1="53" y2="53" stroke="#E6E6E6" stroke-width="0.8"/><path d="M40.5 5.5V15.5H50.5Z" fill="#E4E4E4" stroke="#D0D0D0"/></svg>
<div class="lb" style="left:90px;top:932px">GoGoBnkInfo</div>
<svg class="a" style="left:206px;top:867px" width="62" height="62" viewBox="0 0 62 62"><rect x="1.5" y="1" width="58.5" height="59" fill="#EC2430"/><path d="M14 22Q30 16 46 22Q52 30 48 42Q44 45 40 40Q30 36 20 40Q16 45 12 42Q8 30 14 22Z" fill="none" stroke="#fff" stroke-width="3"/><circle cx="43" cy="27" r="1.8" fill="#fff"/><circle cx="40" cy="31" r="1.8" fill="#fff"/><rect x="2.5" y="44.5" width="15" height="15" fill="#FBFBFB" stroke="#D8D8D8"/><path d="M6.4 47.4H14V55L11.6 52.6Q8.6 54.6 8.8 58.6Q5 57 5.2 53.6Q5.6 50.6 9 49.8Z" fill="#2D5EA8"/></svg>
<div class="lb" style="left:185px;top:932px">MyComGa...<br>- Shortcut</div>
<svg class="a" style="left:1631px;top:6px" width="62" height="62" viewBox="0 0 62 62"><ellipse cx="29.5" cy="35" rx="25.5" ry="17" transform="rotate(-32 29.5 35)" fill="#C8DCEC" stroke="#9AB4CA" stroke-width="0.8"/><ellipse cx="28" cy="33" rx="21" ry="12" transform="rotate(-32 28 33)" fill="#E2EEF8"/><circle cx="12.7" cy="33" r="3.8" fill="#E02424"/><circle cx="21" cy="25" r="3.6" fill="#44B030"/><circle cx="32.6" cy="20" r="3.8" fill="#F4B818"/><circle cx="25.6" cy="36" r="2.6" fill="#8EB4C8"/><path d="M29 57L46 14" stroke="#E8862A" stroke-width="3" stroke-linecap="round"/><path d="M29 57L46 14" stroke="#F8B060" stroke-width="1" stroke-linecap="round"/><path d="M44 15L42 12L47 3L57 9L49 17Z" fill="#D8A870"/><path d="M44 14L48 16" stroke="#8A8A8A" stroke-width="2"/><rect x="2.5" y="44.5" width="15" height="15" fill="#FBFBFB" stroke="#D8D8D8"/><path d="M6.4 47.4H14V55L11.6 52.6Q8.6 54.6 8.8 58.6Q5 57 5.2 53.6Q5.6 50.6 9 49.8Z" fill="#2D5EA8"/></svg>
<div class="lb" style="left:1610px;top:71px">mspaint -<br>Shortcut</div>
<svg class="a" style="left:1821px;top:6px" width="62" height="62" viewBox="0 0 62 62"><circle cx="31" cy="31" r="28" fill="#0E1C48" stroke="#6A6A6A" stroke-width="2"/><ellipse cx="31" cy="18" rx="20" ry="10" fill="#3A4A78" opacity="0.6"/><path d="M31 9L39 23H23Z" fill="#6878A0"/><path d="M23 25L31 39L15 39Z" fill="#5A6A98" opacity="0.8"/><g transform="translate(36,33) scale(1.200)"><path d="M0.5 3Q10 -0.5 19.5 3V11Q19.5 18.5 10 22.8Q0.5 18.5 0.5 11Z" fill="#F6B52C" stroke="#4A4A3A" stroke-width="0.8"/><path d="M1 3.4Q5.5 1.6 10 1.2V11H1Z" fill="#1B6BCB"/><path d="M10 11H19Q18.8 18 10 22.2Z" fill="#1B6BCB"/><path d="M10 1V22.4M0.8 11H19.2" stroke="#FFFFFF" stroke-width="1.1"/></g><rect x="2.5" y="44.5" width="15" height="15" fill="#FBFBFB" stroke="#D8D8D8"/><path d="M6.4 47.4H14V55L11.6 52.6Q8.6 54.6 8.8 58.6Q5 57 5.2 53.6Q5.6 50.6 9 49.8Z" fill="#2D5EA8"/></svg>
<div class="lb" style="left:1800px;top:71px">RogueKiller</div>
<svg class="a" style="left:1441px;top:129px" width="62" height="62" viewBox="0 0 62 62"><rect x="4.5" y="11" width="53" height="39" fill="#F6F6F6" stroke="#D8D8D8"/><rect x="4.5" y="11" width="53" height="2" fill="#C8C8C8"/><polygon points="31.00,28.00 30.88,29.39 28.86,30.13 28.40,31.12 29.13,33.14 28.14,34.13 26.12,33.40 25.13,33.86 24.39,35.88 23.00,36.00 21.92,34.15 20.87,33.86 19.00,34.93 17.86,34.13 18.22,32.01 17.60,31.12 15.48,30.74 15.12,29.39 16.76,28.00 16.85,26.92 15.48,25.26 16.07,24.00 18.22,23.99 18.99,23.22 19.00,21.07 20.26,20.48 21.92,21.85 23.00,21.76 24.39,20.12 25.74,20.48 26.12,22.60 27.01,23.22 29.13,22.86 29.93,24.00 28.86,25.87 29.15,26.92" fill="#D0D4D8" stroke="#B8BCC0" stroke-width="0.8"/><circle cx="23" cy="28" r="3.36" fill="#F6F6F6" stroke="#B8BCC0" stroke-width="0.8"/><polygon points="41.00,39.00 40.88,40.17 39.32,40.79 38.89,41.60 39.24,43.24 38.33,43.99 36.79,43.32 35.91,43.59 35.00,45.00 33.83,44.88 33.21,43.32 32.40,42.89 30.76,43.24 30.01,42.33 30.68,40.79 30.41,39.91 29.00,39.00 29.12,37.83 30.68,37.21 31.11,36.40 30.76,34.76 31.67,34.01 33.21,34.68 34.09,34.41 35.00,33.00 36.17,33.12 36.79,34.68 37.60,35.11 39.24,34.76 39.99,35.67 39.32,37.21 39.59,38.09" fill="#D0D4D8" stroke="#B8BCC0" stroke-width="0.8"/><circle cx="35" cy="39" r="2.52" fill="#F6F6F6" stroke="#B8BCC0" stroke-width="0.8"/></svg>
<div class="lb" style="left:1420px;top:194px">Win 7 Viewer</div>
<svg class="a" style="left:1631px;top:129px" width="62" height="62" viewBox="0 0 62 62"><clipPath id="cpshs35"><path d="M6 34Q6 10 31 10Q56 10 56 34Q55 42 46 48L45 52.5H19L18 48Q7 42 6 34Z"/></clipPath><path d="M3.7 33Q3 7.5 31.2 7.5Q59 7.5 58.6 33Q57 42 48 49L47 55H17.9L17 49Q5 42 3.7 33Z" fill="#EAB050"/><path d="M6 34Q6 10 31 10Q56 10 56 34Q55 42 46 48L45 52.5H19L18 48Q7 42 6 34Z" fill="#4ED8E4"/><g clip-path="url(#cpshs35)"><circle cx="31" cy="54" r="30" fill="#52DCE8"/><circle cx="31" cy="54" r="24" fill="#48CCE6"/><circle cx="31" cy="54" r="18" fill="#40BCE2"/><circle cx="31" cy="54" r="12" fill="#38ACDC"/><circle cx="31" cy="54" r="6" fill="#3098D0"/><rect x="0" y="47" width="62" height="8" fill="#1A7AA8" opacity="0.5"/></g><path d="M6.4 26.5L7.9 22.2L12.2 26.2Z" fill="#E88A3A"/><path d="M10.1 18.4L13.0 14.9L15.7 20.1Z" fill="#E88A3A"/><path d="M16.3 12.2L20.3 9.9L21.0 15.7Z" fill="#E88A3A"/><path d="M24.3 8.4L28.8 7.6L27.5 13.3Z" fill="#E88A3A"/><path d="M33.2 7.6L37.7 8.4L34.5 13.3Z" fill="#E88A3A"/><path d="M41.7 9.9L45.7 12.2L41.0 15.7Z" fill="#E88A3A"/><path d="M49.0 14.9L51.9 18.4L46.3 20.1Z" fill="#E88A3A"/><path d="M54.1 22.2L55.6 26.5L49.8 26.2Z" fill="#E88A3A"/><rect x="2.5" y="44.5" width="15" height="15" fill="#FBFBFB" stroke="#D8D8D8"/><path d="M6.4 47.4H14V55L11.6 52.6Q8.6 54.6 8.8 58.6Q5 57 5.2 53.6Q5.6 50.6 9 49.8Z" fill="#2D5EA8"/></svg>
<div class="lb" style="left:1610px;top:194px">Start Menu<br>Settings</div>
<svg class="a" style="left:1726px;top:129px" width="62" height="62" viewBox="0 0 62 62"><rect x="1" y="1" width="60" height="60" fill="#0EA00A"/><path d="M5 19L10 26Q20 29 35 25L39 12L42 8L45 12L51 14L58 21L56 26L50 26L47 31L46 38L45 47L40 47L38 40L24 41L22 53L15 53L13 41Q8 35 9 28Z" fill="#1E1E1E"/><path d="M38 24Q43 30 49 28" fill="none" stroke="#D83828" stroke-width="2.2"/><circle cx="47" cy="15" r="1.2" fill="#ddd"/><g transform="translate(33,33) scale(1.200)"><path d="M0.5 3Q10 -0.5 19.5 3V11Q19.5 18.5 10 22.8Q0.5 18.5 0.5 11Z" fill="#F6B52C" stroke="#4A4A3A" stroke-width="0.8"/><path d="M1 3.4Q5.5 1.6 10 1.2V11H1Z" fill="#1B6BCB"/><path d="M10 11H19Q18.8 18 10 22.2Z" fill="#1B6BCB"/><path d="M10 1V22.4M0.8 11H19.2" stroke="#FFFFFF" stroke-width="1.1"/></g><rect x="2.5" y="44.5" width="15" height="15" fill="#FBFBFB" stroke="#D8D8D8"/><path d="M6.4 47.4H14V55L11.6 52.6Q8.6 54.6 8.8 58.6Q5 57 5.2 53.6Q5.6 50.6 9 49.8Z" fill="#2D5EA8"/></svg>
<div class="lb" style="left:1705px;top:194px">WinPatrol -<br>Shortcut</div>
<svg class="a" style="left:1631px;top:252px" width="62" height="62" viewBox="0 0 62 62"><path d="M28 9L35 4L42 9L35 14Z" fill="#40C8C8" stroke="#0A0A0A" stroke-width="1.2"/><path d="M42 12L49 7L56 12L49 17Z" fill="#40C8C8" stroke="#0A0A0A" stroke-width="1.2"/><path d="M6 26L20 20H46L50 30L42 48L32 60H10L4 48Z" fill="#0A6868" stroke="#000" stroke-width="1.5"/><path d="M9 28L18 28L18 37L9 37Z" fill="#38D0D0" stroke="#000" stroke-width="1.2"/><path d="M21 24L30 24L30 33L21 33Z" fill="#38D0D0" stroke="#000" stroke-width="1.2"/><path d="M33 24L42 24L42 33L33 33Z" fill="#38D0D0" stroke="#000" stroke-width="1.2"/><path d="M8 40L17 40L17 49L8 49Z" fill="#38D0D0" stroke="#000" stroke-width="1.2"/><path d="M20 36L29 36L29 45L20 45Z" fill="#38D0D0" stroke="#000" stroke-width="1.2"/><path d="M32 36L41 36L41 45L32 45Z" fill="#38D0D0" stroke="#000" stroke-width="1.2"/><path d="M18 48L27 48L27 57L18 57Z" fill="#38D0D0" stroke="#000" stroke-width="1.2"/><path d="M30 48L39 48L39 57L30 57Z" fill="#38D0D0" stroke="#000" stroke-width="1.2"/><rect x="11" y="30" width="3" height="3" fill="#E0FFFF"/><rect x="23" y="26" width="3" height="3" fill="#E0FFFF"/><rect x="36" y="27" width="3" height="3" fill="#E0FFFF"/><rect x="10" y="43" width="3" height="3" fill="#E0FFFF"/><rect x="23" y="38" width="3" height="3" fill="#E0FFFF"/><rect x="34" y="39" width="3" height="3" fill="#E0FFFF"/><rect x="21" y="50" width="3" height="3" fill="#E0FFFF"/><rect x="33" y="51" width="3" height="3" fill="#E0FFFF"/><rect x="2.5" y="44.5" width="15" height="15" fill="#FBFBFB" stroke="#D8D8D8"/><path d="M6.4 47.4H14V55L11.6 52.6Q8.6 54.6 8.8 58.6Q5 57 5.2 53.6Q5.6 50.6 9 49.8Z" fill="#2D5EA8"/></svg>
<div class="lb" style="left:1610px;top:317px">NTREGOPT</div>
<svg class="a" style="left:1726px;top:252px" width="62" height="62" viewBox="0 0 62 62"><path d="M16 6H44L48 12V40H16Z" fill="#C8E4EC" opacity="0.9"/><path d="M24 16H38V28H26Z" fill="none" stroke="#6A9CB0" stroke-width="1.2"/><circle cx="17" cy="45" r="10" fill="#E8E8E8" stroke="#B8B8B8"/><circle cx="17" cy="45" r="2" fill="#999"/><g transform="translate(33,32) scale(1.200)"><path d="M0.5 3Q10 -0.5 19.5 3V11Q19.5 18.5 10 22.8Q0.5 18.5 0.5 11Z" fill="#F6B52C" stroke="#4A4A3A" stroke-width="0.8"/><path d="M1 3.4Q5.5 1.6 10 1.2V11H1Z" fill="#1B6BCB"/><path d="M10 11H19Q18.8 18 10 22.2Z" fill="#1B6BCB"/><path d="M10 1V22.4M0.8 11H19.2" stroke="#FFFFFF" stroke-width="1.1"/></g><rect x="2.5" y="44.5" width="15" height="15" fill="#FBFBFB" stroke="#D8D8D8"/><path d="M6.4 47.4H14V55L11.6 52.6Q8.6 54.6 8.8 58.6Q5 57 5.2 53.6Q5.6 50.6 9 49.8Z" fill="#2D5EA8"/></svg>
<div class="lb" style="left:1705px;top:317px">Windows 7<br>USB DVD...</div>
<svg class="a" style="left:1821px;top:252px" width="62" height="62" viewBox="0 0 62 62"><path d="M31 5Q26 9 27 13Q16 15 12 26Q8 40 20 50Q30 57 40 52Q36 58 32 60Q46 56 51 44Q56 30 48 20Q42 13 33 13Q30 9 31 5Z" fill="#F26A2B"/><circle cx="31" cy="33" r="7.5" fill="#7ECCC6"/><rect x="2.5" y="44.5" width="15" height="15" fill="#FBFBFB" stroke="#D8D8D8"/><path d="M6.4 47.4H14V55L11.6 52.6Q8.6 54.6 8.8 58.6Q5 57 5.2 53.6Q5.6 50.6 9 49.8Z" fill="#2D5EA8"/></svg>
<div class="lb" style="left:1800px;top:317px">Origin</div>
<svg class="a" style="left:1631px;top:375px" width="62" height="62" viewBox="0 0 62 62"><path d="M8 24L14 20V54L8 56Z" fill="#D83030"/><path d="M14 20H22V54H14Z" fill="#F05050"/><rect x="18" y="18" width="14" height="14" fill="#F0C040"/><path d="M22 30L42 36V44L22 38Z" fill="#40C040"/><path d="M18 40L40 46V52L18 48Z" fill="#3060D8"/><rect x="34" y="36" width="10" height="14" fill="#D050D0"/><path d="M10 52L46 56V60H10Z" fill="#C02828"/><path d="M36 10L46 14L44 19L34 15Z" fill="#D888F0"/><rect x="44" y="40" width="6" height="4" fill="#60A8F0"/><rect x="2.5" y="44.5" width="15" height="15" fill="#FBFBFB" stroke="#D8D8D8"/><path d="M6.4 47.4H14V55L11.6 52.6Q8.6 54.6 8.8 58.6Q5 57 5.2 53.6Q5.6 50.6 9 49.8Z" fill="#2D5EA8"/></svg>
<div class="lb" style="left:1610px;top:440px">Defragment<br>and Optimi...</div>
<svg class="a" style="left:1726px;top:375px" width="62" height="62" viewBox="0 0 62 62"><rect x="5" y="13" width="52" height="36" rx="1" fill="#2A7CC0"/><rect x="6.5" y="14.5" width="49" height="33" fill="#62BDF2"/><rect x="6.5" y="14.5" width="49" height="12" fill="#84CCF6" opacity="0.6"/><circle cx="19" cy="30" r="8.5" fill="#3A98DC" stroke="#E8F6FF" stroke-width="0.8"/><path d="M19 30V21.5A8.5 8.5 0 0 1 27.5 30Z" fill="#F8B020"/><path d="M27.5 30H32L34 24H40" fill="none" stroke="#2A6AA8" stroke-width="0.8"/><rect x="39" y="22" width="11" height="4" rx="2" fill="#A8DCFA"/><rect x="39" y="28.5" width="11" height="4" rx="2" fill="#A8DCFA"/><rect x="39" y="35" width="11" height="4" rx="2" fill="#A8DCFA"/><circle cx="48" cy="24" r="1.2" fill="#F08A30"/><circle cx="40" cy="30.5" r="1" fill="#1A5AA0"/><circle cx="40" cy="37" r="1" fill="#1A5AA0"/><rect x="12" y="42" width="40" height="1.6" fill="#1A70B8"/><rect x="12" y="42" width="15" height="1.6" fill="#E8B850"/></svg>
<svg class="a" style="left:1821px;top:375px" width="62" height="62" viewBox="0 0 62 62"><linearGradient id="cpgst42" x1="0.3" y1="0" x2="0.7" y2="1"><stop offset="0" stop-color="#0F1E46"/><stop offset="0.55" stop-color="#14407A"/><stop offset="1" stop-color="#1A86C8"/></linearGradient><circle cx="31" cy="31" r="30" fill="url(#cpgst42)"/><clipPath id="cpst42"><circle cx="31" cy="31" r="30"/></clipPath><g clip-path="url(#cpst42)"><path d="M0 24L22 33L27 47L0 38Z" fill="#F0F4F8"/></g><path d="M24 41L40 25" stroke="#E8EEF4" stroke-width="8" stroke-linecap="round"/><circle cx="41.4" cy="23.2" r="9.7" fill="#E8EEF4"/><circle cx="41.4" cy="23.2" r="6.6" fill="#16305E"/><circle cx="41.4" cy="23.2" r="5.2" fill="#DDE6EE"/><circle cx="23.5" cy="42" r="7" fill="#F4F6F8"/><circle cx="23.5" cy="42" r="4.2" fill="#16305E"/><circle cx="23.5" cy="42" r="2.6" fill="#F0F4F8"/><rect x="2.5" y="44.5" width="15" height="15" fill="#FBFBFB" stroke="#D8D8D8"/><path d="M6.4 47.4H14V55L11.6 52.6Q8.6 54.6 8.8 58.6Q5 57 5.2 53.6Q5.6 50.6 9 49.8Z" fill="#2D5EA8"/></svg>
<div class="lb" style="left:1800px;top:440px">Steam</div>
<svg class="a" style="left:1631px;top:498px" width="62" height="62" viewBox="0 0 62 62"><path d="M8 34Q6 6 30 6Q54 6 52 34" fill="none" stroke="#0A1E90" stroke-width="4.5"/><rect x="3" y="28" width="10" height="22" rx="5" fill="#1028A8" stroke="#06145A" stroke-width="1"/><rect x="47" y="28" width="10" height="22" rx="5" fill="#1028A8" stroke="#06145A" stroke-width="1"/><path d="M13 38L15 28L17 34L19 18L21 30L23 12L25 24L27 8L29 20L31 10L33 22L35 12L37 26L39 16L41 30L43 22L45 32L47 28L47 44L45 40L43 48L41 42L39 50L37 44L35 52L33 46L31 54L29 46L27 52L25 44L23 50L21 42L19 48L17 42L15 46L13 40Z" fill="#F8C818"/><path d="M13 38L16 32L19 36L22 26L25 38L28 22L31 36L34 24L37 36L40 28L43 36L47 34L47 42L43 40L40 46L37 40L34 48L31 40L28 46L25 40L22 46L19 40L16 44L13 40Z" fill="#E82810"/><rect x="2.5" y="44.5" width="15" height="15" fill="#FBFBFB" stroke="#D8D8D8"/><path d="M6.4 47.4H14V55L11.6 52.6Q8.6 54.6 8.8 58.6Q5 57 5.2 53.6Q5.6 50.6 9 49.8Z" fill="#2D5EA8"/></svg>
<div class="lb" style="left:1610px;top:563px">Audacity</div>
<svg class="a" style="left:1726px;top:498px" width="62" height="62" viewBox="0 0 62 62"><circle cx="9" cy="10" r="6" fill="#2A7AE8"/><circle cx="51" cy="10" r="6" fill="#2A7AE8"/><circle cx="30" cy="30" r="27" fill="#60C8F8"/><path d="M30 3A27 27 0 0 1 57 30H30Z" fill="#40A8F0"/><path d="M3 30A27 27 0 0 0 30 57V30Z" fill="#1A68D0"/><path d="M57 30A27 27 0 0 1 30 57V30Z" fill="#2A88E8"/><circle cx="30" cy="30" r="10" fill="#7ECCC6"/><g transform="translate(33,32) scale(1.200)"><path d="M0.5 3Q10 -0.5 19.5 3V11Q19.5 18.5 10 22.8Q0.5 18.5 0.5 11Z" fill="#F6B52C" stroke="#4A4A3A" stroke-width="0.8"/><path d="M1 3.4Q5.5 1.6 10 1.2V11H1Z" fill="#1B6BCB"/><path d="M10 11H19Q18.8 18 10 22.2Z" fill="#1B6BCB"/><path d="M10 1V22.4M0.8 11H19.2" stroke="#FFFFFF" stroke-width="1.1"/></g><rect x="2.5" y="44.5" width="15" height="15" fill="#FBFBFB" stroke="#D8D8D8"/><path d="M6.4 47.4H14V55L11.6 52.6Q8.6 54.6 8.8 58.6Q5 57 5.2 53.6Q5.6 50.6 9 49.8Z" fill="#2D5EA8"/></svg>
<div class="lb" style="left:1705px;top:563px">Panda Cloud<br>Cleaner</div>
<svg class="a" style="left:1821px;top:498px" width="62" height="62" viewBox="0 0 62 62"><rect x="4.5" y="4.5" width="54" height="54" rx="5" fill="#F0F0F0" stroke="#D8D8D8"/><circle cx="33" cy="30" r="17" fill="#2A7AD0"/><circle cx="33" cy="30" r="11" fill="#E8F0F8"/><path d="M28 21V33Q28 37 33 37Q38 37 38 33V21" fill="none" stroke="#2A7AD0" stroke-width="4"/><circle cx="13" cy="18" r="3.5" fill="#2A7AD0"/><circle cx="18" cy="11" r="2" fill="#2A7AD0"/><g transform="translate(34,33) scale(1.200)"><path d="M0.5 3Q10 -0.5 19.5 3V11Q19.5 18.5 10 22.8Q0.5 18.5 0.5 11Z" fill="#F6B52C" stroke="#4A4A3A" stroke-width="0.8"/><path d="M1 3.4Q5.5 1.6 10 1.2V11H1Z" fill="#1B6BCB"/><path d="M10 11H19Q18.8 18 10 22.2Z" fill="#1B6BCB"/><path d="M10 1V22.4M0.8 11H19.2" stroke="#FFFFFF" stroke-width="1.1"/></g><rect x="2.5" y="44.5" width="15" height="15" fill="#FBFBFB" stroke="#D8D8D8"/><path d="M6.4 47.4H14V55L11.6 52.6Q8.6 54.6 8.8 58.6Q5 57 5.2 53.6Q5.6 50.6 9 49.8Z" fill="#2D5EA8"/></svg>
<div class="lb" style="left:1800px;top:563px">Uplay -<br>Shortcut</div>
<svg class="a" style="left:1631px;top:621px" width="62" height="62" viewBox="0 0 62 62"><path d="M2 4H8V58H4V10H2Z" fill="#D0D0D0" stroke="#A0A0A0" stroke-width="0.6"/><rect x="8" y="14" width="52" height="36" rx="2" fill="#58B858"/><rect x="8" y="50" width="40" height="6" fill="#E8C040"/><rect x="14" y="18" width="5" height="5" fill="#C83030"/><rect x="22" y="28" width="18" height="14" fill="#C8C8C8"/><path d="M24 22H44V26M14 34H20" stroke="#A0D8A0" stroke-width="1"/><g transform="translate(33,31) scale(1.200)"><path d="M0.5 3Q10 -0.5 19.5 3V11Q19.5 18.5 10 22.8Q0.5 18.5 0.5 11Z" fill="#F6B52C" stroke="#4A4A3A" stroke-width="0.8"/><path d="M1 3.4Q5.5 1.6 10 1.2V11H1Z" fill="#1B6BCB"/><path d="M10 11H19Q18.8 18 10 22.2Z" fill="#1B6BCB"/><path d="M10 1V22.4M0.8 11H19.2" stroke="#FFFFFF" stroke-width="1.1"/></g><rect x="2.5" y="44.5" width="15" height="15" fill="#FBFBFB" stroke="#D8D8D8"/><path d="M6.4 47.4H14V55L11.6 52.6Q8.6 54.6 8.8 58.6Q5 57 5.2 53.6Q5.6 50.6 9 49.8Z" fill="#2D5EA8"/></svg>
<div class="lb" style="left:1610px;top:686px">GPU-Z.1.18.0<br>- Shortcut</div>
<svg class="a" style="left:1726px;top:621px" width="62" height="62" viewBox="0 0 62 62"><path d="M2 30Q4 10 16 4Q24 8 30 20Q36 8 44 4Q58 12 59 34Q56 50 44 56Q42 52 38 48Q44 40 44 30L30 44L16 30Q16 40 22 48Q18 52 16 56Q4 48 2 30Z" fill="#1E5AB8" stroke="#103A80" stroke-width="1"/><rect x="2.5" y="44.5" width="15" height="15" fill="#FBFBFB" stroke="#D8D8D8"/><path d="M6.4 47.4H14V55L11.6 52.6Q8.6 54.6 8.8 58.6Q5 57 5.2 53.6Q5.6 50.6 9 49.8Z" fill="#2D5EA8"/></svg>
<div class="lb" style="left:1705px;top:686px">Malwareby...</div>
<svg class="a" style="left:1821px;top:621px" width="62" height="62" viewBox="0 0 62 62"><path d="M3 46L40 38L57 44L20 52Z" fill="#F4F4F4"/><path d="M3 46L20 52V58L3 52Z" fill="#262626"/><path d="M20 52L57 44V50L20 58Z" fill="#D4D4D4"/><rect x="19" y="52.5" width="2" height="2" fill="#30C030"/><path d="M2 10L12 8L16 12L6 14Z" fill="#D8B870"/><path d="M14 14L40 8L43 24L17 30Z" fill="#D8BE80"/><path d="M17 30L43 24L43 34L17 40Z" fill="#C4A060"/><path d="M10 12L20 16" stroke="#C8A860" stroke-width="3"/><rect x="2.5" y="44.5" width="15" height="15" fill="#FBFBFB" stroke="#D8D8D8"/><path d="M6.4 47.4H14V55L11.6 52.6Q8.6 54.6 8.8 58.6Q5 57 5.2 53.6Q5.6 50.6 9 49.8Z" fill="#2D5EA8"/></svg>
<div class="lb" style="left:1800px;top:686px">Disk Cleanup</div>
<svg class="a" style="left:1631px;top:744px" width="62" height="62" viewBox="0 0 62 62"><path d="M4 10L56 6V44L8 46Z" fill="#C8C8C8" stroke="#888" stroke-width="0.8"/><path d="M8 13L52 10V40L11 42Z" fill="#3A3A3A"/><path d="M24 46L36 45L40 54L22 55Z" fill="#1A1A1A"/><path d="M16 55H46V58H16Z" fill="#111"/><rect x="1.5" y="1.5" width="27" height="20" fill="#111"/><text x="2.5" y="19" font-family="Liberation Mono" font-weight="bold" font-size="21" fill="#FAF020">99</text><g transform="translate(33,33) scale(1.200)"><path d="M0.5 3Q10 -0.5 19.5 3V11Q19.5 18.5 10 22.8Q0.5 18.5 0.5 11Z" fill="#F6B52C" stroke="#4A4A3A" stroke-width="0.8"/><path d="M1 3.4Q5.5 1.6 10 1.2V11H1Z" fill="#1B6BCB"/><path d="M10 11H19Q18.8 18 10 22.2Z" fill="#1B6BCB"/><path d="M10 1V22.4M0.8 11H19.2" stroke="#FFFFFF" stroke-width="1.1"/></g><rect x="2.5" y="44.5" width="15" height="15" fill="#FBFBFB" stroke="#D8D8D8"/><path d="M6.4 47.4H14V55L11.6 52.6Q8.6 54.6 8.8 58.6Q5 57 5.2 53.6Q5.6 50.6 9 49.8Z" fill="#2D5EA8"/></svg>
<div class="lb" style="left:1610px;top:809px">Fraps</div>
<svg class="a" style="left:1726px;top:744px" width="62" height="62" viewBox="0 0 62 62"><g transform="translate(8,0) scale(0.86)"><path d="M11.4 38H51.2L56.5 59.5H5.2Z" fill="#F49A10"/><path d="M5.2 58H56.5V60H5.2Z" fill="#D87808"/><path d="M29 3Q31 1 33 3L46 48Q46 53 31 53Q15 53 15 48Z" fill="#F08010"/><path d="M27 10.8Q31 12 35.5 10.8L38.5 21.4Q31 23.5 23.8 21.4Z" fill="#E4E4E8"/><path d="M20.6 32.9Q31 35.5 41.6 32.9L44.6 44.4Q31 47.5 17.2 44.4Z" fill="#E4E4E8"/><path d="M15 48Q15 53 31 53Q46 53 46 48" fill="none" stroke="#D06A08" stroke-width="1.5"/></g><g transform="translate(33,33) scale(1.200)"><path d="M0.5 3Q10 -0.5 19.5 3V11Q19.5 18.5 10 22.8Q0.5 18.5 0.5 11Z" fill="#F6B52C" stroke="#4A4A3A" stroke-width="0.8"/><path d="M1 3.4Q5.5 1.6 10 1.2V11H1Z" fill="#1B6BCB"/><path d="M10 11H19Q18.8 18 10 22.2Z" fill="#1B6BCB"/><path d="M10 1V22.4M0.8 11H19.2" stroke="#FFFFFF" stroke-width="1.1"/></g><rect x="2.5" y="44.5" width="15" height="15" fill="#FBFBFB" stroke="#D8D8D8"/><path d="M6.4 47.4H14V55L11.6 52.6Q8.6 54.6 8.8 58.6Q5 57 5.2 53.6Q5.6 50.6 9 49.8Z" fill="#2D5EA8"/></svg>
<div class="lb" style="left:1705px;top:809px">VLC media<br>player</div>
<svg class="a" style="left:1821px;top:744px" width="62" height="62" viewBox="0 0 62 62"><path d="M2 22L24 14H56L58 32L56 50H8L2 44Z" fill="#2A2A2A"/><path d="M2 22L24 14H56L52 24H8Z" fill="#404040"/><path d="M14 26L40 22V26L14 30Z" fill="#1A1A1A"/><rect x="14" y="32" width="8" height="6" fill="#555"/><g transform="translate(33,33) scale(1.200)"><path d="M0.5 3Q10 -0.5 19.5 3V11Q19.5 18.5 10 22.8Q0.5 18.5 0.5 11Z" fill="#F6B52C" stroke="#4A4A3A" stroke-width="0.8"/><path d="M1 3.4Q5.5 1.6 10 1.2V11H1Z" fill="#1B6BCB"/><path d="M10 11H19Q18.8 18 10 22.2Z" fill="#1B6BCB"/><path d="M10 1V22.4M0.8 11H19.2" stroke="#FFFFFF" stroke-width="1.1"/></g><rect x="2.5" y="44.5" width="15" height="15" fill="#FBFBFB" stroke="#D8D8D8"/><path d="M6.4 47.4H14V55L11.6 52.6Q8.6 54.6 8.8 58.6Q5 57 5.2 53.6Q5.6 50.6 9 49.8Z" fill="#2D5EA8"/></svg>
<div class="lb" style="left:1800px;top:809px">HP Deskjet<br>2510 series</div>
<svg class="a" style="left:1631px;top:867px" width="62" height="62" viewBox="0 0 62 62"><clipPath id="cpch152"><circle cx="31" cy="31" r="27.5"/></clipPath><circle cx="31" cy="31" r="27.5" fill="#DB4437"/><g clip-path="url(#cpch152)"><path d="M31.00 18.35L113.50 18.35L89.34 89.34L0.71 108.77L41.96 37.32L31 31Z" fill="#FFCD40"/><path d="M41.96 37.32L0.71 108.77L-40.45 72.25L-21.21 -34.12L20.04 37.33L31 31Z" fill="#0F9D58"/></g><circle cx="31" cy="31" r="12.65" fill="#fff"/><circle cx="31" cy="31" r="10.45" fill="#4285F4"/></svg>
<div class="lb" style="left:1610px;top:932px">DBS</div>
<svg class="a" style="left:1726px;top:867px" width="62" height="62" viewBox="0 0 62 62"><circle cx="30.5" cy="31" r="27" fill="#fff"/><path d="M10 30Q14 14 32 14V8L46 20L32 30V24Q20 24 10 30Z" fill="#1E4A7A"/><path d="M51 32Q47 48 29 48V54L15 42L29 32V38Q41 38 51 32Z" fill="#1A9AE0"/><rect x="2.5" y="44.5" width="15" height="15" fill="#FBFBFB" stroke="#D8D8D8"/><path d="M6.4 47.4H14V55L11.6 52.6Q8.6 54.6 8.8 58.6Q5 57 5.2 53.6Q5.6 50.6 9 49.8Z" fill="#2D5EA8"/></svg>
<div class="lb" style="left:1705px;top:932px">Reflect</div>
<svg class="a" style="left:1821px;top:867px" width="62" height="62" viewBox="0 0 62 62"><path d="M6 8L38 6V56L6 58Z" fill="#B8B8B8"/><path d="M6 8L38 6L42 10L10 12Z" fill="#E0E0E0"/><rect x="10" y="16" width="26" height="4" fill="#909090"/><rect x="10" y="36" width="26" height="2" fill="#A0A0A0"/><ellipse cx="46" cy="40" rx="14" ry="6" fill="#E8E8E8"/><rect x="32" y="40" width="28" height="16" fill="#2A6AD0"/><ellipse cx="46" cy="56" rx="14" ry="4" fill="#D0D0D0"/><path d="M30 6Q46 2 52 16L56 14L50 26L40 18L46 18Q42 10 30 12Z" fill="#E82020"/><g transform="translate(34,34) scale(1.200)"><path d="M0.5 3Q10 -0.5 19.5 3V11Q19.5 18.5 10 22.8Q0.5 18.5 0.5 11Z" fill="#F6B52C" stroke="#4A4A3A" stroke-width="0.8"/><path d="M1 3.4Q5.5 1.6 10 1.2V11H1Z" fill="#1B6BCB"/><path d="M10 11H19Q18.8 18 10 22.2Z" fill="#1B6BCB"/><path d="M10 1V22.4M0.8 11H19.2" stroke="#FFFFFF" stroke-width="1.1"/></g><rect x="2.5" y="44.5" width="15" height="15" fill="#FBFBFB" stroke="#D8D8D8"/><path d="M6.4 47.4H14V55L11.6 52.6Q8.6 54.6 8.8 58.6Q5 57 5.2 53.6Q5.6 50.6 9 49.8Z" fill="#2D5EA8"/></svg>
<div class="lb" style="left:1800px;top:932px">Revo<br>Uninstaller</div>
</div><!--desk-->

<div id="win" class="a">
  <div id="tb" class="a">
    <svg class="a" style="left:9px;top:9px" width="22" height="20" viewBox="2 6 58 50"><clipPath id="cpsht"><path d="M6 34Q6 10 31 10Q56 10 56 34Q55 42 46 48L45 52.5H19L18 48Q7 42 6 34Z"/></clipPath><path d="M3.7 33Q3 7.5 31.2 7.5Q59 7.5 58.6 33Q57 42 48 49L47 55H17.9L17 49Q5 42 3.7 33Z" fill="#EAB050"/><path d="M6 34Q6 10 31 10Q56 10 56 34Q55 42 46 48L45 52.5H19L18 48Q7 42 6 34Z" fill="#4ED8E4"/><g clip-path="url(#cpsht)"><circle cx="31" cy="54" r="30" fill="#52DCE8"/><circle cx="31" cy="54" r="24" fill="#48CCE6"/><circle cx="31" cy="54" r="18" fill="#40BCE2"/><circle cx="31" cy="54" r="12" fill="#38ACDC"/><circle cx="31" cy="54" r="6" fill="#3098D0"/><rect x="0" y="47" width="62" height="8" fill="#1A7AA8" opacity="0.5"/></g><path d="M6.4 26.5L7.9 22.2L12.2 26.2Z" fill="#E88A3A"/><path d="M10.1 18.4L13.0 14.9L15.7 20.1Z" fill="#E88A3A"/><path d="M16.3 12.2L20.3 9.9L21.0 15.7Z" fill="#E88A3A"/><path d="M24.3 8.4L28.8 7.6L27.5 13.3Z" fill="#E88A3A"/><path d="M33.2 7.6L37.7 8.4L34.5 13.3Z" fill="#E88A3A"/><path d="M41.7 9.9L45.7 12.2L41.0 15.7Z" fill="#E88A3A"/><path d="M49.0 14.9L51.9 18.4L46.3 20.1Z" fill="#E88A3A"/><path d="M54.1 22.2L55.6 26.5L49.8 26.2Z" fill="#E88A3A"/></svg>
    <div class="t" style="left:35px;top:10px;color:#0A0A1E">Settings for Classic Start Menu 4.3.0</div>
    <div class="a" style="left:614px;top:18px;width:12px;height:1px;background:#000"></div>
    <div class="a" style="left:672px;top:13px;width:13px;height:13px;border:1px solid #000"></div>
    <svg class="a" style="left:731px;top:13px" width="13" height="13" viewBox="0 0 13 13"><path d="M0.5 0.5 L12.5 12.5 M12.5 0.5 L0.5 12.5" stroke="#000" stroke-width="1.1"/></svg>
  </div>
  <!-- search -->
  <svg class="a" style="left:16px;top:63px" width="18" height="18" viewBox="0 0 18 18">
    <circle cx="11" cy="7" r="5.2" fill="#CFE6FA" stroke="#8AA8C0" stroke-width="1.2"/>
    <path d="M7.3 10.7 L2 16" stroke="#6A7078" stroke-width="2.2" stroke-linecap="round"/>
  </svg>
  <div class="a" style="left:45px;top:56px;width:240px;height:30px;background:#fff;border:1px solid #7A7A7A"></div>
  <div class="t" style="left:52px;top:61px;color:#6D6D6D">Search settings</div>
  <div class="a" style="left:309px;top:63px;width:16px;height:16px;border:1px solid #333;background:#fff"></div>
  <svg class="a" style="left:309px;top:63px" width="16" height="16" viewBox="0 0 16 16"><path d="M3 8.2 L6.3 11.5 L13 4.5" fill="none" stroke="#222" stroke-width="1.3"/></svg>
  <div class="t" style="left:329px;top:63px;font-size:15px">Show all settings</div>
  <div class="t" style="left:701px;top:63px;color:#2A6CC4;text-decoration:underline">Help...</div>
  <!-- tabs row1 -->
  <div class="tab" style="left:17px;top:90px;height:26px;line-height:27px;width:121px">Start Menu Style</div>
  <div class="tab" style="left:137px;top:90px;height:26px;line-height:27px;width:69px">Controls</div>
  <div class="tab" style="left:205px;top:90px;height:26px;line-height:27px;width:102px">Special Items</div>
  <div class="tab" style="left:306px;top:90px;height:26px;line-height:27px;width:88px">Main Menu</div>
  <div class="tab" style="left:393px;top:90px;height:26px;line-height:27px;width:127px">General Behavior</div>
  <div class="tab" style="left:519px;top:90px;height:26px;line-height:27px;width:87px">Search Box</div>
  <div class="tab" style="left:605px;top:90px;height:26px;line-height:27px;width:86px">Menu Look</div>
  <div class="tab" style="left:690px;top:90px;height:26px;line-height:27px;width:59px">Skin</div>
  <!-- tabs row2 -->
  <div class="tab" style="left:114px;top:116px;height:24px;width:65px;padding-left:7px">Taskbar</div>
  <div class="tab" style="left:178px;top:116px;height:24px;width:156px;padding-left:7px">Windows 10 Settings</div>
  <div class="tab" style="left:333px;top:116px;height:24px;width:163px;padding-left:7px">Customize Start Menu</div>
  <div class="tab" style="left:495px;top:116px;height:24px;width:110px;padding-left:7px">Context Menu</div>
  <div class="tab" style="left:604px;top:116px;height:24px;width:66px;padding-left:7px">Sounds</div>
  <div class="tab" style="left:669px;top:116px;height:24px;width:80px;padding-left:7px">Language</div>
  <!-- panel -->
  <div class="a" style="left:15px;top:140px;width:736px;height:578px;background:#fff;border:1px solid #D9D9D9"></div>
  <div class="tab" style="left:15px;top:113px;width:100px;height:29px;background:#fff;line-height:24px;padding-left:9px;font-size:15.2px;padding-top:1px;border-color:#D9D9D9">Start Button</div>
  <!-- tree -->
  <div class="a" style="left:33px;top:160px;width:702px;height:488px;border:1px solid #828790;background:#fff"></div>
  <div class="a" style="left:36px;top:162px;width:171px;height:22px;background:#CCE8FF"></div>
  <div id="tree">
<div class="a" style="left:38px;top:165px;width:16px;height:16px;border:1px solid #333;background:#fff"></div>
<div class="row" style="left:59px;top:162px;color:#000;font-weight:bold;">Replace Start button</div>
<div class="a" style="left:38px;top:187px;width:16px;height:16px;border:1px solid #E0E0E0;background:#fff"></div>
<svg class="a" style="left:38px;top:187px" width="16" height="16" viewBox="0 0 16 16"><path d="M3 8.2 L6.3 11.5 L13 4.5" fill="none" stroke="#D6D6D6" stroke-width="1.3"/></svg>
<div class="row" style="left:59px;top:184px;color:#6D6D6D;">Show on all taskbars</div>
<svg class="a" style="left:38px;top:209px" width="16" height="17" viewBox="0 0 16 17"><path d="M1.5 0.5H10L13.5 4V15.5H1.5Z" fill="#fff" stroke="#D0D0D0"/><path d="M10 0.5V4H13.5" fill="none" stroke="#D8D8D8"/><polygon points="10.20,11.00 10.10,12.01 8.60,12.49 8.24,13.17 8.68,14.68 7.89,15.32 6.49,14.60 5.76,14.83 5.00,16.20 3.99,16.10 3.51,14.60 2.83,14.24 1.32,14.68 0.68,13.89 1.40,12.49 1.17,11.76 -0.20,11.00 -0.10,9.99 1.40,9.51 1.76,8.83 1.32,7.32 2.11,6.68 3.51,7.40 4.24,7.17 5.00,5.80 6.01,5.90 6.49,7.40 7.17,7.76 8.68,7.32 9.32,8.11 8.60,9.51 8.83,10.24" fill="#fff" stroke="#C4C4C4" stroke-width="0.9"/><circle cx="5" cy="11" r="1.8" fill="#fff" stroke="#C4C4C4" stroke-width="0.9"/></svg>
<div class="row" style="left:59px;top:206px;color:#6D6D6D;">Button tooltip: $Menu.Start</div>
<svg class="a" style="left:38px;top:231px" width="16" height="17" viewBox="0 0 16 17"><path d="M1.5 0.5H10L13.5 4V15.5H1.5Z" fill="#fff" stroke="#D0D0D0"/><path d="M10 0.5V4H13.5" fill="none" stroke="#D8D8D8"/><polygon points="10.20,11.00 10.10,12.01 8.60,12.49 8.24,13.17 8.68,14.68 7.89,15.32 6.49,14.60 5.76,14.83 5.00,16.20 3.99,16.10 3.51,14.60 2.83,14.24 1.32,14.68 0.68,13.89 1.40,12.49 1.17,11.76 -0.20,11.00 -0.10,9.99 1.40,9.51 1.76,8.83 1.32,7.32 2.11,6.68 3.51,7.40 4.24,7.17 5.00,5.80 6.01,5.90 6.49,7.40 7.17,7.76 8.68,7.32 9.32,8.11 8.60,9.51 8.83,10.24" fill="#fff" stroke="#C4C4C4" stroke-width="0.9"/><circle cx="5" cy="11" r="1.8" fill="#fff" stroke="#C4C4C4" stroke-width="0.9"/></svg>
<div class="row" style="left:59px;top:228px;color:#6D6D6D;font-weight:bold;">Button look</div>
<div class="a" style="left:58px;top:253px;width:16px;height:16px;border:1px solid #F5F5F5;border-radius:50%;background:#fff"></div>
<div class="row" style="left:78px;top:250px;color:#6D6D6D;">Aero button</div>
<div class="a" style="left:58px;top:275px;width:16px;height:16px;border:1px solid #F5F5F5;border-radius:50%;background:#fff"></div>
<div class="row" style="left:78px;top:272px;color:#6D6D6D;">Classic button</div>
<svg class="a" style="left:76px;top:297px" width="16" height="17" viewBox="0 0 16 17"><path d="M1.5 0.5H10L13.5 4V15.5H1.5Z" fill="#fff" stroke="#D0D0D0"/><path d="M10 0.5V4H13.5" fill="none" stroke="#D8D8D8"/><polygon points="10.20,11.00 10.10,12.01 8.60,12.49 8.24,13.17 8.68,14.68 7.89,15.32 6.49,14.60 5.76,14.83 5.00,16.20 3.99,16.10 3.51,14.60 2.83,14.24 1.32,14.68 0.68,13.89 1.40,12.49 1.17,11.76 -0.20,11.00 -0.10,9.99 1.40,9.51 1.76,8.83 1.32,7.32 2.11,6.68 3.51,7.40 4.24,7.17 5.00,5.80 6.01,5.90 6.49,7.40 7.17,7.76 8.68,7.32 9.32,8.11 8.60,9.51 8.83,10.24" fill="#fff" stroke="#C4C4C4" stroke-width="0.9"/><circle cx="5" cy="11" r="1.8" fill="#fff" stroke="#C4C4C4" stroke-width="0.9"/></svg>
<div class="row" style="left:97px;top:294px;color:#6D6D6D;">Button icon: ,1</div>
<svg class="a" style="left:76px;top:319px" width="16" height="17" viewBox="0 0 16 17"><path d="M1.5 0.5H10L13.5 4V15.5H1.5Z" fill="#fff" stroke="#D0D0D0"/><path d="M10 0.5V4H13.5" fill="none" stroke="#D8D8D8"/><polygon points="10.20,11.00 10.10,12.01 8.60,12.49 8.24,13.17 8.68,14.68 7.89,15.32 6.49,14.60 5.76,14.83 5.00,16.20 3.99,16.10 3.51,14.60 2.83,14.24 1.32,14.68 0.68,13.89 1.40,12.49 1.17,11.76 -0.20,11.00 -0.10,9.99 1.40,9.51 1.76,8.83 1.32,7.32 2.11,6.68 3.51,7.40 4.24,7.17 5.00,5.80 6.01,5.90 6.49,7.40 7.17,7.76 8.68,7.32 9.32,8.11 8.60,9.51 8.83,10.24" fill="#fff" stroke="#C4C4C4" stroke-width="0.9"/><circle cx="5" cy="11" r="1.8" fill="#fff" stroke="#C4C4C4" stroke-width="0.9"/></svg>
<div class="row" style="left:97px;top:316px;color:#6D6D6D;">Icon size: 0</div>
<svg class="a" style="left:76px;top:341px" width="16" height="17" viewBox="0 0 16 17"><path d="M1.5 0.5H10L13.5 4V15.5H1.5Z" fill="#fff" stroke="#D0D0D0"/><path d="M10 0.5V4H13.5" fill="none" stroke="#D8D8D8"/><polygon points="10.20,11.00 10.10,12.01 8.60,12.49 8.24,13.17 8.68,14.68 7.89,15.32 6.49,14.60 5.76,14.83 5.00,16.20 3.99,16.10 3.51,14.60 2.83,14.24 1.32,14.68 0.68,13.89 1.40,12.49 1.17,11.76 -0.20,11.00 -0.10,9.99 1.40,9.51 1.76,8.83 1.32,7.32 2.11,6.68 3.51,7.40 4.24,7.17 5.00,5.80 6.01,5.90 6.49,7.40 7.17,7.76 8.68,7.32 9.32,8.11 8.60,9.51 8.83,10.24" fill="#fff" stroke="#C4C4C4" stroke-width="0.9"/><circle cx="5" cy="11" r="1.8" fill="#fff" stroke="#C4C4C4" stroke-width="0.9"/></svg>
<div class="row" style="left:97px;top:338px;color:#6D6D6D;">Button text: $Menu.Start</div>
<div class="a" style="left:58px;top:363px;width:16px;height:16px;border:1px solid #F5F5F5;border-radius:50%;background:#fff"></div>
<div class="a" style="left:62px;top:367px;width:8px;height:8px;border-radius:50%;background:#E0E0E0"></div>
<div class="row" style="left:78px;top:360px;color:#6D6D6D;">Custom button</div>
<svg class="a" style="left:76px;top:385px" width="16" height="17" viewBox="0 0 16 17"><path d="M1.5 0.5H10L13.5 4V15.5H1.5Z" fill="#fff" stroke="#D0D0D0"/><path d="M10 0.5V4H13.5" fill="none" stroke="#D8D8D8"/><polygon points="10.20,11.00 10.10,12.01 8.60,12.49 8.24,13.17 8.68,14.68 7.89,15.32 6.49,14.60 5.76,14.83 5.00,16.20 3.99,16.10 3.51,14.60 2.83,14.24 1.32,14.68 0.68,13.89 1.40,12.49 1.17,11.76 -0.20,11.00 -0.10,9.99 1.40,9.51 1.76,8.83 1.32,7.32 2.11,6.68 3.51,7.40 4.24,7.17 5.00,5.80 6.01,5.90 6.49,7.40 7.17,7.76 8.68,7.32 9.32,8.11 8.60,9.51 8.83,10.24" fill="#fff" stroke="#C4C4C4" stroke-width="0.9"/><circle cx="5" cy="11" r="1.8" fill="#fff" stroke="#C4C4C4" stroke-width="0.9"/></svg>
<div class="row" style="left:97px;top:382px;color:#6D6D6D;font-weight:bold;">Button image: Z:\Pictures\flower.png</div>
<svg class="a" style="left:76px;top:407px" width="16" height="17" viewBox="0 0 16 17"><path d="M1.5 0.5H10L13.5 4V15.5H1.5Z" fill="#fff" stroke="#D0D0D0"/><path d="M10 0.5V4H13.5" fill="none" stroke="#D8D8D8"/><polygon points="10.20,11.00 10.10,12.01 8.60,12.49 8.24,13.17 8.68,14.68 7.89,15.32 6.49,14.60 5.76,14.83 5.00,16.20 3.99,16.10 3.51,14.60 2.83,14.24 1.32,14.68 0.68,13.89 1.40,12.49 1.17,11.76 -0.20,11.00 -0.10,9.99 1.40,9.51 1.76,8.83 1.32,7.32 2.11,6.68 3.51,7.40 4.24,7.17 5.00,5.80 6.01,5.90 6.49,7.40 7.17,7.76 8.68,7.32 9.32,8.11 8.60,9.51 8.83,10.24" fill="#fff" stroke="#C4C4C4" stroke-width="0.9"/><circle cx="5" cy="11" r="1.8" fill="#fff" stroke="#C4C4C4" stroke-width="0.9"/></svg>
<div class="row" style="left:97px;top:404px;color:#6D6D6D;">Button size: 0</div>
<div class="a" style="left:76px;top:429px;width:16px;height:16px;border:1px solid #E3E3E3;background:#fff"></div>
<div class="row" style="left:97px;top:426px;color:#6D6D6D;">Align to corner of the screen</div>
</div>
  <!-- footer -->
  <div class="t" style="left:33px;top:655px;color:#1A1A1A;font-size:15.2px">The settings that are modified from the default will show in bold</div>
  <div class="t" style="left:33px;top:675px;color:#1A1A1A;font-size:15.2px">Right-click on a setting for more functions</div>
  <div class="t" style="left:15px;top:736px;color:#2A6CC4;text-decoration:underline">www.classicshell.net</div>
  <div class="btn" style="left:406px;width:118px;text-align:left;padding-left:25px">Backup</div>
  <svg class="a" style="left:508px;top:740px" width="11" height="7" viewBox="0 0 11 7"><path d="M0 0 L11 0 L5.5 6Z" fill="#000"/></svg>
  <div class="btn" style="left:540px;width:98px;border:2px solid #0078D7;line-height:29px">OK</div>
  <div class="btn" style="left:654px;width:98px">Cancel</div>
  <svg class="a" style="left:753px;top:766px" width="11" height="11" viewBox="0 0 11 11" fill="#B4B4B4">
    <rect x="8" y="0" width="3" height="3"/><rect x="4" y="4" width="3" height="3"/><rect x="8" y="4" width="3" height="3"/>
    <rect x="0" y="8" width="3" height="3"/><rect x="4" y="8" width="3" height="3"/><rect x="8" y="8" width="3" height="3"/>
  </svg>
  <div class="a" style="left:0;top:38px;width:1px;height:742px;background:#8AB4CC"></div><div class="a" style="left:1px;top:38px;width:1px;height:741px;background:#E8F4FC"></div><div class="a" style="left:766px;top:38px;width:1px;height:741px;background:#E8F4FC"></div><div class="a" style="left:1px;top:778px;width:766px;height:1px;background:#E8F4FC"></div>
  <div class="a" style="left:767px;top:38px;width:1px;height:742px;background:#8AB4CC"></div>
  <div class="a" style="left:0;top:779px;width:768px;height:1px;background:#8AB4CC"></div>
</div>

<div id="task" class="a">
  <svg class="a" style="left:19px;top:14px" width="22" height="22" viewBox="0 0 22 22">
    <path d="M1 3.2L9 2.1V10H1Z M10 2L21 0.5V10H10Z M1 11H9V19.9L1 18.8Z M10 11H21V21.5L10 20Z" fill="#fff"/>
  </svg>
  <div class="a" style="left:60px;top:0;width:430px;height:50px;background:#355F92"></div>
  <div class="a" style="left:70px;top:15px;font-size:17.3px;line-height:22px;color:#C8D4E3">Search Windows</div>
  <div class="a" style="left:494px;top:0;width:200px;height:50px;background:#004C9F"></div>
  <div class="a" style="left:494px;top:47px;width:200px;height:3px;background:#A6D3FF"></div>
  <svg class="a" style="left:507px;top:13px" width="29" height="26" viewBox="2 6 58 50"><clipPath id="cpshk"><path d="M6 34Q6 10 31 10Q56 10 56 34Q55 42 46 48L45 52.5H19L18 48Q7 42 6 34Z"/></clipPath><path d="M3.7 33Q3 7.5 31.2 7.5Q59 7.5 58.6 33Q57 42 48 49L47 55H17.9L17 49Q5 42 3.7 33Z" fill="#EAB050"/><path d="M6 34Q6 10 31 10Q56 10 56 34Q55 42 46 48L45 52.5H19L18 48Q7 42 6 34Z" fill="#4ED8E4"/><g clip-path="url(#cpshk)"><circle cx="31" cy="54" r="30" fill="#52DCE8"/><circle cx="31" cy="54" r="24" fill="#48CCE6"/><circle cx="31" cy="54" r="18" fill="#40BCE2"/><circle cx="31" cy="54" r="12" fill="#38ACDC"/><circle cx="31" cy="54" r="6" fill="#3098D0"/><rect x="0" y="47" width="62" height="8" fill="#1A7AA8" opacity="0.5"/></g><path d="M6.4 26.5L7.9 22.2L12.2 26.2Z" fill="#E88A3A"/><path d="M10.1 18.4L13.0 14.9L15.7 20.1Z" fill="#E88A3A"/><path d="M16.3 12.2L20.3 9.9L21.0 15.7Z" fill="#E88A3A"/><path d="M24.3 8.4L28.8 7.6L27.5 13.3Z" fill="#E88A3A"/><path d="M33.2 7.6L37.7 8.4L34.5 13.3Z" fill="#E88A3A"/><path d="M41.7 9.9L45.7 12.2L41.0 15.7Z" fill="#E88A3A"/><path d="M49.0 14.9L51.9 18.4L46.3 20.1Z" fill="#E88A3A"/><path d="M54.1 22.2L55.6 26.5L49.8 26.2Z" fill="#E88A3A"/></svg>
  <div class="a" style="left:541px;top:15px;font-size:14.4px;line-height:22px;color:#EEF4FF;white-space:nowrap">Settings for Classic ...</div>
  <!-- pinned icons -->
  <svg class="a" style="left:708px;top:10px" width="34" height="30" viewBox="0 0 34 30">
    <path d="M8 2H24L26 4V26H8Z" fill="#8A8A8A"/><path d="M16 2H26V26H16Z" fill="#C8C8C8"/><rect x="17" y="8" width="8" height="2" fill="#555"/><rect x="17" y="13" width="8" height="1.5" fill="#555"/>
    <path d="M2 22L32 18" stroke="#111" stroke-width="2"/><ellipse cx="8" cy="25" rx="5" ry="4" fill="#A8C8F0" stroke="#111"/><ellipse cx="20" cy="24" rx="5.5" ry="4" fill="#E03030" stroke="#111"/>
  </svg>
  <svg class="a" style="left:771px;top:10px" width="31" height="30" viewBox="0 0 31 30">
    <path d="M14 1Q26 2 28 14Q28 26 16 29" fill="none" stroke="#5A78A8" stroke-width="1.2"/>
    <path d="M12 2Q24 4 24 15Q24 25 14 27Q20 20 20 14Q20 7 12 2Z" fill="#C8D4E4"/>
    <path d="M6 4Q10 1 12 3Q16 8 14 14L16 16L13 18Q14 24 10 26L8 26" fill="#4A6A98"/>
    <circle cx="4" cy="12" r="3" fill="#3CB83C"/>
  </svg>
  <svg class="a" style="left:835px;top:10px" width="28" height="28" viewBox="0 0 62 62"><clipPath id="cptk3"><circle cx="31" cy="31" r="28"/></clipPath><circle cx="31" cy="31" r="28" fill="#DB4437"/><g clip-path="url(#cptk3)"><path d="M31.00 18.12L115.00 18.12L90.40 90.40L0.15 110.19L42.15 37.44L31 31Z" fill="#FFCD40"/><path d="M42.15 37.44L0.15 110.19L-41.75 73.00L-22.15 -35.31L19.85 37.44L31 31Z" fill="#0F9D58"/></g><circle cx="31" cy="31" r="12.88" fill="#fff"/><circle cx="31" cy="31" r="10.64" fill="#4285F4"/></svg>
  <svg class="a" style="left:895px;top:10px" width="31" height="30" viewBox="0 0 31 30">
    <rect x="0.5" y="0.5" width="30" height="29" rx="4" fill="#18A0A0" stroke="#80E0E0"/>
    <rect x="5" y="5" width="21" height="14" fill="#108080" stroke="#C0F0F0" stroke-width="1"/>
    <path d="M3 21H28L30 25H1Z" fill="#D8E8E8"/><circle cx="12" cy="15" r="2" fill="#E8E060"/><circle cx="19" cy="13" r="2" fill="#E8E060"/>
  </svg>
  <svg class="a" style="left:958px;top:10px" width="31" height="28" viewBox="0 0 31 28">
    <path d="M28 6Q24 1 18 1Q6 2 4 14Q5 26 18 27Q25 27 29 22L24 17Q21 20 18 20Q12 19 12 14Q12 8 18 8Q21 8 23 11Z" fill="#E03A2A"/>
    <path d="M18 3L12 14" stroke="#2A6AD0" stroke-width="2"/><path d="M4 18L12 12L16 20L8 27Q2 24 0 22Z" fill="#F0D8A8"/>
  </svg>
  <svg class="a" style="left:1020px;top:11px" width="30" height="29" viewBox="0 0 30 29">
    <circle cx="15" cy="14.5" r="13.5" fill="#000" stroke="#30C040" stroke-width="1.6"/>
    <path d="M3 8A13.5 13.5 0 0 1 22 2" fill="none" stroke="#30A8E0" stroke-width="1.6"/>
    <text x="7.5" y="21" font-family="Liberation Serif" font-size="15" fill="#C8C8C8">PS</text>
  </svg>
  <svg class="a" style="left:1083px;top:10px" width="30" height="29" viewBox="0 0 30 29">
    <circle cx="15" cy="14.5" r="11.5" fill="#5A5040"/><rect x="9" y="9" width="12" height="12" fill="#C89050"/>
    <circle cx="15" cy="14.5" r="12.5" fill="none" stroke="#E02A20" stroke-width="3"/>
    <path d="M6 6L24 23" stroke="#E02A20" stroke-width="3"/>
  </svg>
  <!-- tray -->
  <svg class="a" style="left:1624px;top:14px" width="24" height="22" viewBox="0 0 24 22">
    <path d="M10.5 1L19.5 4V10Q19.5 17 10.5 20.5Q1.5 17 1.5 10V4Z" fill="#fff" stroke="#000" stroke-width="1.2"/>
    <path d="M10.5 1V20.5M1.5 10.5H19.5" stroke="#000" stroke-width="1"/>
    <circle cx="16" cy="16" r="5.2" fill="#1E9E46"/><path d="M13.5 16L15.3 17.8L18.6 14.4" fill="none" stroke="#fff" stroke-width="1.3"/>
  </svg>
  <svg class="a" style="left:1655px;top:16px" width="20" height="17" viewBox="0 0 20 17">
    <path d="M1 8Q1 3 4 1Q7 2 10 6Q13 2 16 1Q19 3 19 8Q19 13 15 16Q14 13 13 12Q15 10 15 7L10 12L5 7Q5 10 7 12Q6 13 5 16Q1 13 1 8Z" fill="#2E6AC0"/>
  </svg>
  <svg class="a" style="left:1688px;top:14px" width="18" height="22" viewBox="0 0 18 22">
    <path d="M2.5 1.5H9.5V7.5H2.5Z M1 7.5H11V20.5H1Z" fill="none" stroke="#fff" stroke-width="1.1"/>
    <rect x="4" y="3.5" width="1" height="1" fill="#fff"/><rect x="7" y="3.5" width="1" height="1" fill="#fff"/>
    <path d="M9 18L11 20L16.5 14.5" fill="none" stroke="#A8C8F0" stroke-width="1"/>
  </svg>
  <svg class="a" style="left:1714px;top:16px" width="22" height="18" viewBox="0 0 22 18">
    <path d="M5 1.5H20.5V13H5 M2.5 5.5V16 M1 1.5H5.5V6H1Z M13 13V15.5M9 15.5H17" fill="none" stroke="#fff" stroke-width="1.1"/>
  </svg>
  <svg class="a" style="left:1744px;top:15px" width="22" height="20" viewBox="0 0 22 20">
    <path d="M1.5 6.5H5L9.5 2V17.5L5 13H1.5Z" fill="none" stroke="#fff" stroke-width="1.1"/>
    <path d="M12 7.5Q13.5 9.8 12 12M14.5 4.5Q17.5 9.8 14.5 15.5M17 1.5Q21.5 9.8 17 18.5" fill="none" stroke="#fff" stroke-width="1.1"/>
  </svg>
  <div class="a" style="left:1770px;top:1px;width:84px;text-align:center;font-size:15px;line-height:24px;color:#fff">9:22 AM<br>5/8/2017</div>
  <svg class="a" style="left:1868px;top:14px" width="22" height="22" viewBox="0 0 22 22">
    <path d="M1.5 1.5H20.5V16.5H13L11 18.5L9 16.5H1.5Z" fill="none" stroke="#fff" stroke-width="1.1"/>
  </svg>
  <div class="a" style="left:1914px;top:0;width:1px;height:50px;background:#5A7AA8"></div>
</div>
</body></html>
